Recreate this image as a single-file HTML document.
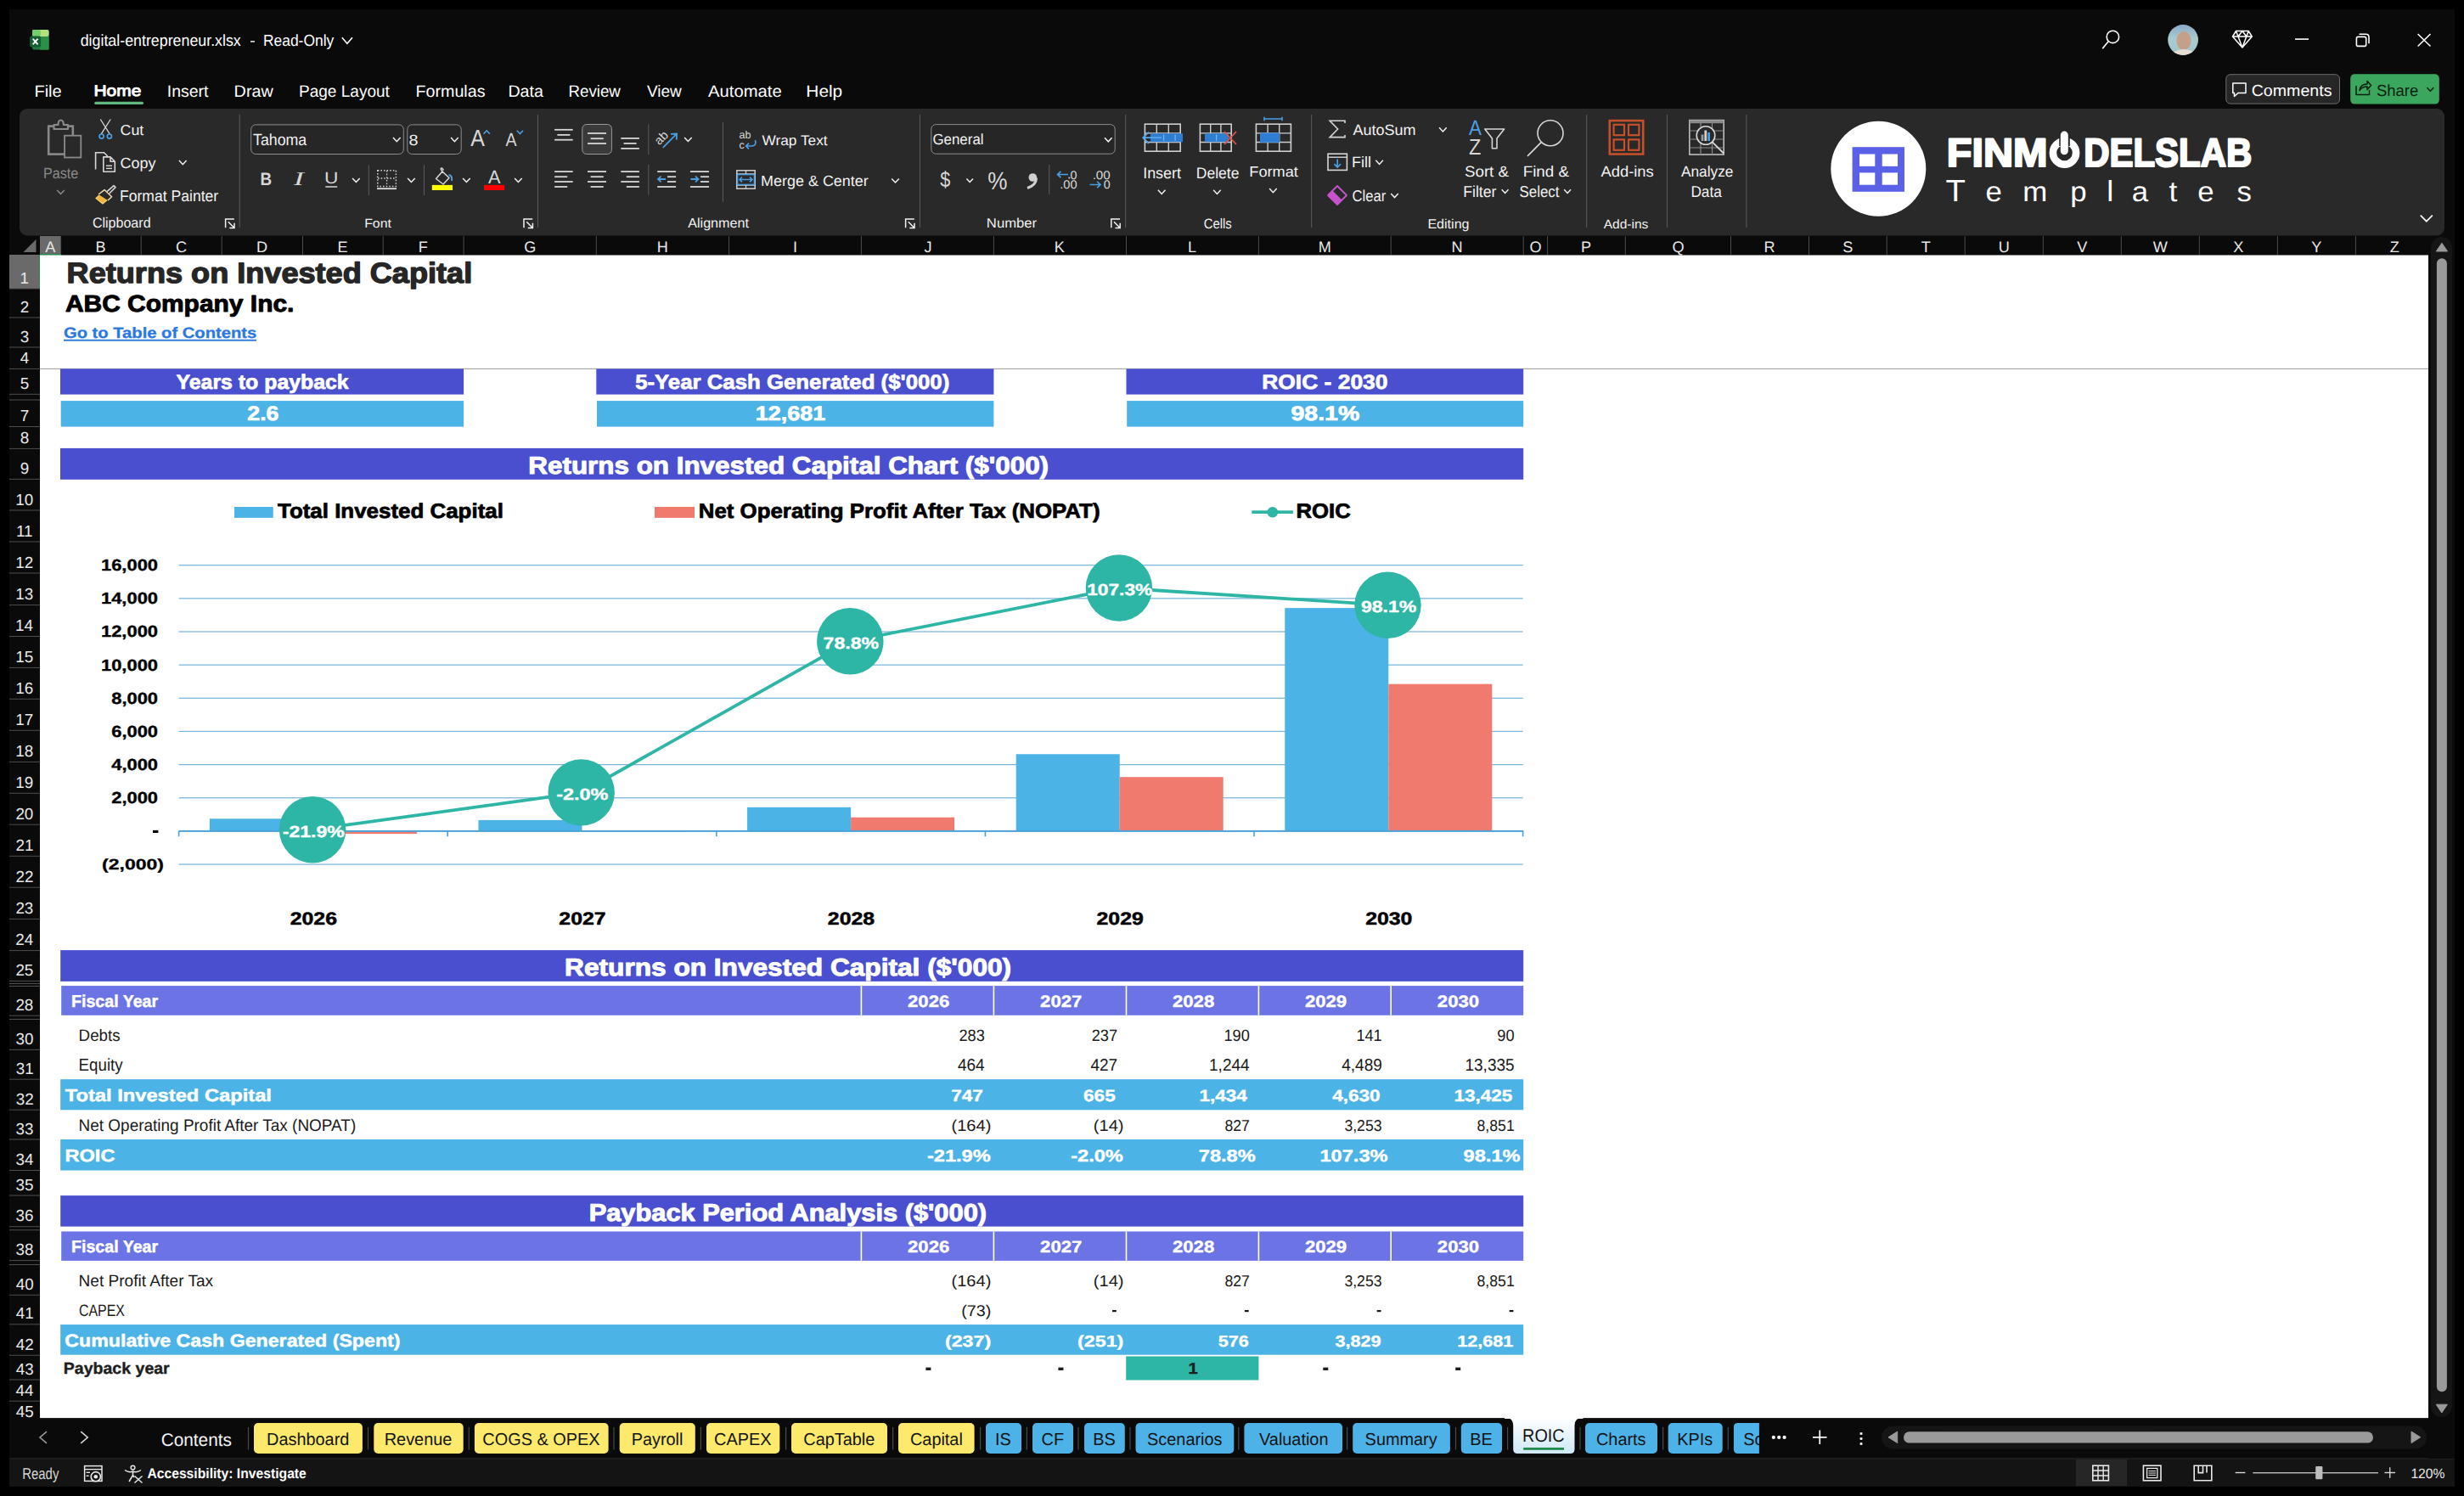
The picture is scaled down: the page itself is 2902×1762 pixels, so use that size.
<!DOCTYPE html>
<html><head><meta charset="utf-8"><title>digital-entrepreneur.xlsx - Excel</title>
<style>html,body{margin:0;padding:0;background:#000;overflow:hidden;width:2902px;height:1762px}
svg{display:block} text{white-space:pre} </style></head>
<body><svg width="2902" height="1762" viewBox="0 0 2902 1762" text-rendering="geometricPrecision">
<rect x="11.00" y="11.00" width="2880.00" height="1740.00" fill="#0a0a0a" />
<rect x="38" y="35" width="19.6" height="23.6" rx="2" fill="#1d7a3e"/>
<rect x="38" y="35" width="19.6" height="8" rx="2" fill="#b6e07b"/>
<rect x="38" y="35" width="9.8" height="8" rx="2" fill="#6fcf6b"/>
<rect x="47" y="43" width="10.6" height="15.6" fill="#2a8f47"/>
<rect x="35.1" y="42.5" width="13" height="13" rx="2" fill="#155e30"/>
<path d="M38.6 45.6 L44.6 52.4 M44.6 45.6 L38.6 52.4" stroke="#fff" stroke-width="1.8"/>
<text transform="translate(94.69,54.10) scale(0.9427,1)" font-family="Liberation Sans" font-weight="normal" font-size="18.90" fill="#fff" >digital-entrepreneur.xlsx</text>
<rect x="295.00" y="48.20" width="5.00" height="1.40" fill="#fff" />
<text transform="translate(309.90,54.10) scale(0.9261,1)" font-family="Liberation Sans" font-weight="normal" font-size="18.84" fill="#fff" >Read-Only</text>
<path d="M402.8 44.3 L408.9 51.2 L415 44.3" fill="none" stroke="#fff" stroke-width="1.6"/>
<circle cx="2488.4" cy="43.4" r="7.2" fill="none" stroke="#fff" stroke-width="1.6"/><path d="M2483.2 48.8 L2476.2 57.2" stroke="#fff" stroke-width="1.7"/>
<defs><clipPath id="av"><circle cx="2571.1" cy="47" r="17.9"/></clipPath><linearGradient id="avg" x1="0" y1="0" x2="0" y2="1"><stop offset="0" stop-color="#8aa9c8"/><stop offset="0.45" stop-color="#a9cbd0"/><stop offset="1" stop-color="#9fc6c8"/></linearGradient><linearGradient id="tabg" x1="0" y1="0" x2="0" y2="1"><stop offset="0" stop-color="#ffffff"/><stop offset="1" stop-color="#cfe8f6"/></linearGradient></defs>
<g clip-path="url(#av)"><rect x="2553" y="29" width="37" height="37" fill="url(#avg)"/><ellipse cx="2572" cy="48" rx="8.5" ry="11" fill="#c49f8a"/><ellipse cx="2572" cy="67" rx="15" ry="9" fill="#e6ddd3"/></g>
<path d="M2633.5 36.5 L2648.2 36.5 L2652.3 43 L2640.9 56 L2629.5 43 Z M2629.5 43 L2652.3 43 M2636 43 L2640.9 56 L2645.8 43 M2633.5 36.5 L2636 43 L2640.9 36.5 L2645.8 43 L2648.2 36.5" fill="none" stroke="#fff" stroke-width="1.5" stroke-linejoin="round"/>
<rect x="2703.00" y="45.30" width="16.00" height="1.60" fill="#fff" />
<rect x="2775.4" y="43.4" width="11.3" height="11" rx="2" fill="none" stroke="#fff" stroke-width="1.6"/><path d="M2778.5 40.3 L2786.5 40.3 Q2790 40.3 2790 43.8 L2790 51.3" fill="none" stroke="#fff" stroke-width="1.6"/>
<path d="M2847.6 40 L2862.5 54.5 M2862.5 40 L2847.6 54.5" stroke="#fff" stroke-width="1.6"/>
<text transform="translate(40.39,113.80) scale(1.0332,1)" font-family="Liberation Sans" font-weight="normal" font-size="19.42" fill="#fff" >File</text>
<text transform="translate(110.48,113.35) scale(1.1554,1)" font-family="Liberation Sans" font-weight="normal" font-size="18.12" fill="#fff" stroke="#fff" stroke-width="0.90" stroke-linejoin="round" >Home</text>
<rect x="111.20" y="119.80" width="57.80" height="3.30" fill="#5fb97f" rx="1.6" />
<text transform="translate(196.74,113.80) scale(1.0050,1)" font-family="Liberation Sans" font-weight="normal" font-size="19.42" fill="#fff" >Insert</text>
<text transform="translate(275.62,113.80) scale(1.0179,1)" font-family="Liberation Sans" font-weight="normal" font-size="19.42" fill="#fff" >Draw</text>
<text transform="translate(351.98,113.80) scale(0.9810,1)" font-family="Liberation Sans" font-weight="normal" font-size="19.42" fill="#fff" >Page Layout</text>
<text transform="translate(489.42,113.80) scale(1.0153,1)" font-family="Liberation Sans" font-weight="normal" font-size="19.42" fill="#fff" >Formulas</text>
<text transform="translate(598.43,113.80) scale(1.0116,1)" font-family="Liberation Sans" font-weight="normal" font-size="19.42" fill="#fff" >Data</text>
<text transform="translate(669.50,113.80) scale(0.9635,1)" font-family="Liberation Sans" font-weight="normal" font-size="19.42" fill="#fff" >Review</text>
<text transform="translate(762.00,113.80) scale(0.9787,1)" font-family="Liberation Sans" font-weight="normal" font-size="19.42" fill="#fff" >View</text>
<text transform="translate(834.00,113.80) scale(1.0434,1)" font-family="Liberation Sans" font-weight="normal" font-size="19.42" fill="#fff" >Automate</text>
<text transform="translate(949.33,113.80) scale(1.0747,1)" font-family="Liberation Sans" font-weight="normal" font-size="19.42" fill="#fff" >Help</text>
<rect x="2621.8" y="87.7" width="133.7" height="34.4" rx="5" fill="#262626" stroke="#6e6e6e" stroke-width="1"/>
<path d="M2629.8 98 L2645 98 L2645 109.5 L2636 109.5 L2631.5 113.5 L2631.5 109.5 L2629.8 109.5 Z" fill="none" stroke="#fff" stroke-width="1.5" stroke-linejoin="round"/>
<text transform="translate(2651.72,112.80) scale(1.0404,1)" font-family="Liberation Sans" font-weight="normal" font-size="18.84" fill="#fff" >Comments</text>
<rect x="2768.2" y="87.2" width="104.6" height="35.4" rx="5" fill="#3aa65e"/>
<path d="M2775 101 L2775 111.5 L2790.5 111.5 L2790.5 106 M2779 106.5 Q2780 99 2788 99 L2788 95.5 L2792.5 100.5 L2788 105.5 L2788 102 Q2782 102 2779 106.5 Z" fill="none" stroke="#0b1f10" stroke-width="1.5" stroke-linejoin="round"/>
<text transform="translate(2798.96,112.80) scale(0.9807,1)" font-family="Liberation Sans" font-weight="normal" font-size="18.84" fill="#0b1f10" >Share</text>
<path d="M2858.4 103.2 L2862.3 107.2 L2866.2 103.2" fill="none" stroke="#0b1f10" stroke-width="1.5"/>
<rect x="23.00" y="128.00" width="2856.00" height="149.50" fill="#292929" rx="9" />
<rect x="57.2" y="148.6" width="28.6" height="33" fill="none" stroke="#8a8a8a" stroke-width="2.6"/>
<path d="M63.5 152 L63.5 147 L68.5 147 Q68.5 141.5 71.7 141.5 Q74.9 141.5 74.9 147 L80 147 L80 152 Z" fill="#292929" stroke="#8a8a8a" stroke-width="2.2" stroke-linejoin="round"/>
<rect x="76.1" y="159.7" width="19.2" height="25.8" fill="#292929" stroke="#8a8a8a" stroke-width="1.8"/>
<text transform="translate(50.91,209.70) scale(0.9152,1)" font-family="Liberation Sans" font-weight="normal" font-size="17.68" fill="#8a8a8a" >Paste</text>
<path d="M67.2 224.1 L71.5 228.5 L75.8 224.1" fill="none" stroke="#8a8a8a" stroke-width="1.5"/>
<path d="M118.3 140.5 L129.3 157.8 M130.2 140.5 L119.2 157.8" stroke="#d6d6d6" stroke-width="1.3"/>
<circle cx="119.6" cy="160.6" r="2.6" fill="none" stroke="#4a9fe3" stroke-width="1.7"/><circle cx="128.9" cy="160.6" r="2.6" fill="none" stroke="#4a9fe3" stroke-width="1.7"/>
<text transform="translate(141.51,158.70) scale(1.0429,1)" font-family="Liberation Sans" font-weight="normal" font-size="17.10" fill="#f2f2f2" >Cut</text>
<path d="M112.6 199.5 L112.6 179.8 L122.5 179.8 L126.8 184" fill="none" stroke="#d6d6d6" stroke-width="1.6"/>
<path d="M121.8 202.2 L121.8 184.9 L130 184.9 L135.3 190.2 L135.3 202.2 Z M130 184.9 L130 190.2 L135.3 190.2" fill="#292929" stroke="#d6d6d6" stroke-width="1.6" stroke-linejoin="round"/>
<rect x="125.00" y="194.50" width="7.00" height="1.40" fill="#d6d6d6" />
<rect x="125.00" y="197.70" width="7.00" height="1.40" fill="#d6d6d6" />
<text transform="translate(141.50,197.50) scale(1.0259,1)" font-family="Liberation Sans" font-weight="normal" font-size="17.54" fill="#f2f2f2" >Copy</text>
<path d="M211.0 189.1 L215.3 193.7 L219.6 189.1" fill="none" stroke="#f2f2f2" stroke-width="1.5"/>
<path d="M113 233.5 L121.6 226 L129 233 L121 240 Z" fill="#f0b43c" stroke="#f5d27a" stroke-width="1.2" stroke-linejoin="round"/>
<path d="M116 229 L123 223.6 L131.6 231.8 L127 236" fill="#292929" stroke="#f3e0b0" stroke-width="1.4" stroke-linejoin="round"/>
<path d="M126 225.6 L134 218.6 L136 220.6 L128.6 228" fill="#292929" stroke="#d6d6d6" stroke-width="1.6" stroke-linejoin="round"/>
<text transform="translate(141.00,236.60) scale(0.9541,1)" font-family="Liberation Sans" font-weight="normal" font-size="18.41" fill="#f2f2f2" >Format Painter</text>
<text transform="translate(108.90,267.70) scale(0.9548,1)" font-family="Liberation Sans" font-weight="normal" font-size="16.81" fill="#f2f2f2" >Clipboard</text>
<path d="M265.6 268.2 L265.6 258.0 L275.8 258.0 M268.8 261.2 L275.8 268.2 M276.0 262.7 L276.0 268.4 L270.3 268.4" fill="none" stroke="#f2f2f2" stroke-width="1.5"/>
<rect x="281.70" y="134.70" width="1.00" height="133.50" fill="#5c5c5c" />
<rect x="295.7" y="146.9" width="179.6" height="34.6" rx="5.5" fill="#262626" stroke="#8e8e8e" stroke-width="1"/>
<text transform="translate(298.04,171.20) scale(0.9284,1)" font-family="Liberation Sans" font-weight="normal" font-size="19.13" fill="#f2f2f2" >Tahoma</text>
<path d="M463.0 162.1 L467.3 166.7 L471.6 162.1" fill="none" stroke="#f2f2f2" stroke-width="1.5"/>
<rect x="479.8" y="146.9" width="63.4" height="34.6" rx="5.5" fill="#262626" stroke="#8e8e8e" stroke-width="1"/>
<text transform="translate(481.51,170.90) scale(1.1173,1)" font-family="Liberation Sans" font-weight="normal" font-size="17.71" fill="#f2f2f2" >8</text>
<path d="M531.1 162.1 L535.4 166.7 L539.7 162.1" fill="none" stroke="#f2f2f2" stroke-width="1.5"/>
<text transform="translate(554.30,171.60) scale(0.9052,1)" font-family="Liberation Sans" font-weight="normal" font-size="27.54" fill="#d8d8d8" >A</text>
<path d="M569.6 157.6 L573.2 153.8 L576.8 157.6" fill="none" stroke="#4a9fe3" stroke-width="1.6"/>
<text transform="translate(595.50,171.60) scale(0.8818,1)" font-family="Liberation Sans" font-weight="normal" font-size="22.17" fill="#d8d8d8" >A</text>
<path d="M608.8 153.8 L612.4 157.6 L616 153.8" fill="none" stroke="#4a9fe3" stroke-width="1.6"/>
<text transform="translate(306.47,217.70) scale(0.8986,1)" font-family="Liberation Sans" font-weight="bold" font-size="21.00" fill="#d8d8d8" >B</text>
<text transform="translate(345.93,217.70) scale(1.5722,1)" font-family="Liberation Serif" font-weight="normal" font-size="22.62" fill="#d8d8d8" font-style="italic">I</text>
<text transform="translate(382.01,216.40) scale(1.1719,1)" font-family="Liberation Sans" font-weight="normal" font-size="19.42" fill="#d8d8d8" >U</text>
<rect x="383.30" y="219.25" width="13.90" height="1.50" fill="#d8d8d8" />
<path d="M415.1 209.9 L419.4 214.5 L423.7 209.9" fill="none" stroke="#f2f2f2" stroke-width="1.5"/>
<rect x="433.80" y="194.30" width="1.00" height="35.70" fill="#5c5c5c" />
<rect x="444.8" y="200.8" width="21.6" height="18.6" fill="none" stroke="#d0d0d0" stroke-width="1.5" stroke-dasharray="1.6,2"/>
<path d="M455.6 201 L455.6 219 M445 210 L466.4 210" fill="none" stroke="#d0d0d0" stroke-width="1.3" stroke-dasharray="1.6,2"/>
<rect x="444.00" y="221.30" width="23.00" height="1.80" fill="#e0e0e0" />
<path d="M480.1 209.9 L484.4 214.5 L488.7 209.9" fill="none" stroke="#f2f2f2" stroke-width="1.5"/>
<rect x="499.00" y="194.30" width="1.00" height="35.70" fill="#5c5c5c" />
<path d="M513.5 210.5 L521 202 L529 209.5 L522 217 Z M521 202 L519.5 199.6 Q518.5 198 520.5 198 L522.5 200.5" fill="none" stroke="#d8d8d8" stroke-width="1.5" stroke-linejoin="round"/>
<path d="M528.5 206 Q533 206.5 532 213" fill="none" stroke="#4a9fe3" stroke-width="2"/>
<rect x="508.80" y="217.90" width="24.20" height="6.10" fill="#ffff00" />
<path d="M545.1 209.9 L549.4 214.5 L553.7 209.9" fill="none" stroke="#f2f2f2" stroke-width="1.5"/>
<text transform="translate(575.00,215.80) scale(0.9827,1)" font-family="Liberation Sans" font-weight="normal" font-size="22.17" fill="#d8d8d8" >A</text>
<rect x="570.00" y="217.90" width="24.20" height="6.10" fill="#ff0000" />
<path d="M606.1 209.9 L610.4 214.5 L614.7 209.9" fill="none" stroke="#f2f2f2" stroke-width="1.5"/>
<text transform="translate(429.13,268.00) scale(1.0764,1)" font-family="Liberation Sans" font-weight="normal" font-size="14.78" fill="#f2f2f2" >Font</text>
<path d="M617.0 268.2 L617.0 258.0 L627.2 258.0 M620.2 261.2 L627.2 268.2 M627.4 262.7 L627.4 268.4 L621.7 268.4" fill="none" stroke="#f2f2f2" stroke-width="1.5"/>
<rect x="633.00" y="135.00" width="1.00" height="133.00" fill="#5c5c5c" />
<rect x="685.8" y="146.5" width="34.6" height="35" rx="5" fill="#3a3a3a" stroke="#9a9a9a" stroke-width="1"/>
<rect x="653.10" y="151.90" width="21.60" height="1.80" fill="#d6d6d6" />
<rect x="656.40" y="158.00" width="15.00" height="1.80" fill="#d6d6d6" />
<rect x="653.10" y="163.80" width="21.60" height="1.80" fill="#d6d6d6" />
<rect x="692.00" y="156.10" width="22.00" height="1.80" fill="#d6d6d6" />
<rect x="695.60" y="162.30" width="15.20" height="1.80" fill="#d6d6d6" />
<rect x="692.00" y="168.10" width="22.00" height="1.80" fill="#d6d6d6" />
<rect x="731.30" y="162.00" width="21.60" height="1.80" fill="#d6d6d6" />
<rect x="734.60" y="168.00" width="15.00" height="1.80" fill="#d6d6d6" />
<rect x="731.30" y="174.00" width="21.60" height="1.80" fill="#d6d6d6" />
<rect x="763.30" y="146.40" width="1.00" height="35.60" fill="#5c5c5c" />
<text transform="translate(776.5,171.5) rotate(-45)" font-family="Liberation Sans" font-size="14.5" fill="#d8d8d8">ab</text>
<path d="M780.8 173.8 L797 157.6 M790 157.9 L797.1 157.5 L796.7 164.6" fill="none" stroke="#4a9fe3" stroke-width="1.8"/>
<path d="M806.1 161.9 L810.4 166.5 L814.7 161.9" fill="none" stroke="#f2f2f2" stroke-width="1.5"/>
<rect x="851.00" y="143.70" width="1.00" height="94.00" fill="#5c5c5c" />
<text x="870.5" y="162.5" font-family="Liberation Sans" font-size="12.5" fill="#d8d8d8">ab</text><text x="870.5" y="175" font-family="Liberation Sans" font-size="12.5" fill="#d8d8d8">c</text>
<path d="M889.5 165 Q891.5 172 885 172 L878.8 172 M882 168.6 L878.6 172 L882 175.4" fill="none" stroke="#4a9fe3" stroke-width="1.7"/>
<text transform="translate(897.50,170.50) scale(1.0278,1)" font-family="Liberation Sans" font-weight="normal" font-size="16.81" fill="#f2f2f2" >Wrap Text</text>
<rect x="653.10" y="201.20" width="21.60" height="1.80" fill="#d6d6d6" />
<rect x="653.10" y="207.30" width="15.10" height="1.80" fill="#d6d6d6" />
<rect x="653.10" y="213.10" width="21.60" height="1.80" fill="#d6d6d6" />
<rect x="653.10" y="219.10" width="15.10" height="1.80" fill="#d6d6d6" />
<rect x="692.00" y="201.20" width="22.00" height="1.80" fill="#d6d6d6" />
<rect x="695.60" y="207.30" width="15.20" height="1.80" fill="#d6d6d6" />
<rect x="692.00" y="213.10" width="22.00" height="1.80" fill="#d6d6d6" />
<rect x="695.60" y="219.10" width="15.20" height="1.80" fill="#d6d6d6" />
<rect x="731.30" y="201.20" width="21.60" height="1.80" fill="#d6d6d6" />
<rect x="737.80" y="207.30" width="15.10" height="1.80" fill="#d6d6d6" />
<rect x="731.30" y="213.10" width="21.60" height="1.80" fill="#d6d6d6" />
<rect x="737.80" y="219.10" width="15.10" height="1.80" fill="#d6d6d6" />
<rect x="763.30" y="194.00" width="1.00" height="35.50" fill="#5c5c5c" />
<rect x="774.20" y="201.20" width="21.90" height="1.80" fill="#d6d6d6" />
<rect x="786.00" y="207.30" width="10.10" height="1.80" fill="#d6d6d6" />
<rect x="786.00" y="213.10" width="10.10" height="1.80" fill="#d6d6d6" />
<rect x="774.20" y="219.10" width="21.90" height="1.80" fill="#d6d6d6" />
<path d="M784 211 L775 211 M778.6 207.6 L775 211 L778.6 214.4" fill="none" stroke="#4a9fe3" stroke-width="1.8"/>
<rect x="813.00" y="201.20" width="22.00" height="1.80" fill="#d6d6d6" />
<rect x="825.00" y="207.30" width="10.00" height="1.80" fill="#d6d6d6" />
<rect x="825.00" y="213.10" width="10.00" height="1.80" fill="#d6d6d6" />
<rect x="813.00" y="219.10" width="22.00" height="1.80" fill="#d6d6d6" />
<path d="M813.5 211 L822.5 211 M819 207.6 L822.5 211 L819 214.4" fill="none" stroke="#4a9fe3" stroke-width="1.8"/>
<rect x="867.8" y="200.8" width="21.4" height="21.4" fill="none" stroke="#d0d0d0" stroke-width="1.5"/>
<path d="M867.8 205 L889.2 205 M867.8 218 L889.2 218 M878.5 200.8 L878.5 205 M878.5 218 L878.5 222.2" fill="none" stroke="#d0d0d0" stroke-width="1.3"/>
<rect x="868.6" y="205.6" width="19.8" height="11.8" fill="none" stroke="#4a9fe3" stroke-width="1.5"/>
<path d="M871 211.5 L886 211.5 M874 208.6 L871 211.5 L874 214.4 M883 208.6 L886 211.5 L883 214.4" fill="none" stroke="#4a9fe3" stroke-width="1.5"/>
<text transform="translate(896.06,219.10) scale(1.0241,1)" font-family="Liberation Sans" font-weight="normal" font-size="17.54" fill="#f2f2f2" >Merge &amp; Center</text>
<path d="M1050.2 210.4 L1054.5 215.0 L1058.8 210.4" fill="none" stroke="#f2f2f2" stroke-width="1.5"/>
<text transform="translate(810.20,267.90) scale(1.0123,1)" font-family="Liberation Sans" font-weight="normal" font-size="15.94" fill="#f2f2f2" >Alignment</text>
<path d="M1066.6 268.2 L1066.6 258.0 L1076.8 258.0 M1069.8 261.2 L1076.8 268.2 M1077.0 262.7 L1077.0 268.4 L1071.3 268.4" fill="none" stroke="#f2f2f2" stroke-width="1.5"/>
<rect x="1082.90" y="135.00" width="1.00" height="133.00" fill="#5c5c5c" />
<rect x="1096.8" y="146.6" width="216.4" height="34.6" rx="5.5" fill="#262626" stroke="#8e8e8e" stroke-width="1"/>
<text transform="translate(1098.46,170.40) scale(0.9554,1)" font-family="Liberation Sans" font-weight="normal" font-size="17.68" fill="#f2f2f2" >General</text>
<path d="M1301.0 162.2 L1305.3 166.8 L1309.6 162.2" fill="none" stroke="#f2f2f2" stroke-width="1.5"/>
<text transform="translate(1107.28,219.50) scale(0.8496,1)" font-family="Liberation Sans" font-weight="normal" font-size="25.54" fill="#d8d8d8" >$</text>
<path d="M1138.4 210.5 L1142.2 214.5 L1146.0 210.5" fill="none" stroke="#f2f2f2" stroke-width="1.5"/>
<text transform="translate(1163.22,222.50) scale(0.8927,1)" font-family="Liberation Sans" font-weight="normal" font-size="29.29" fill="#d8d8d8" >%</text>
<circle cx="1216.3" cy="209" r="4.8" fill="#d0d0d0"/><path d="M1220.6 209.5 Q1220.5 218 1210 221.5" fill="none" stroke="#d0d0d0" stroke-width="3"/>
<rect x="1235.20" y="194.00" width="1.00" height="35.00" fill="#5c5c5c" />
<text transform="translate(1260.57,210.50) scale(1.0309,1)" font-family="Liberation Sans" font-weight="normal" font-size="13.86" fill="#d8d8d8" >0</text>
<rect x="1258.50" y="208.60" width="1.80" height="1.80" fill="#d8d8d8" />
<text transform="translate(1248.18,222.30) scale(1.0454,1)" font-family="Liberation Sans" font-weight="normal" font-size="14.00" fill="#d8d8d8" >.00</text>
<path d="M1258 205.5 L1245.6 205.5 M1249.4 201.8 L1245.6 205.5 L1249.4 209.2" fill="none" stroke="#4a9fe3" stroke-width="1.7"/>
<text transform="translate(1286.63,210.50) scale(1.0962,1)" font-family="Liberation Sans" font-weight="normal" font-size="13.86" fill="#d8d8d8" >.00</text>
<text transform="translate(1299.77,222.30) scale(1.0204,1)" font-family="Liberation Sans" font-weight="normal" font-size="14.00" fill="#d8d8d8" >0</text>
<path d="M1283.5 217.5 L1296 217.5 M1292.2 213.8 L1296 217.5 L1292.2 221.2" fill="none" stroke="#4a9fe3" stroke-width="1.7"/>
<text transform="translate(1161.87,267.70) scale(1.0527,1)" font-family="Liberation Sans" font-weight="normal" font-size="15.80" fill="#f2f2f2" >Number</text>
<path d="M1308.8 268.2 L1308.8 258.0 L1319.0 258.0 M1312.0 261.2 L1319.0 268.2 M1319.2 262.7 L1319.2 268.4 L1313.5 268.4" fill="none" stroke="#f2f2f2" stroke-width="1.5"/>
<rect x="1325.20" y="135.00" width="1.00" height="133.00" fill="#5c5c5c" />
<rect x="1348.4" y="146.2" width="41.8" height="32.0" fill="none" stroke="#cfcfcf" stroke-width="1.6"/><path d="M1362.3 146.2 L1362.3 178.2" stroke="#cfcfcf" stroke-width="1.4"/><path d="M1376.3 146.2 L1376.3 178.2" stroke="#cfcfcf" stroke-width="1.4"/><path d="M1348.4 156.9 L1390.2 156.9" stroke="#cfcfcf" stroke-width="1.4"/><path d="M1348.4 167.5 L1390.2 167.5" stroke="#cfcfcf" stroke-width="1.4"/>
<rect x="1355.00" y="157.20" width="38.00" height="10.00" fill="#2e7fd4" />
<rect x="1370.00" y="158.60" width="1.20" height="7.20" fill="#7fb6ea" />
<rect x="1383.50" y="158.60" width="1.20" height="7.20" fill="#7fb6ea" />
<path d="M1368 162.2 L1346.5 162.2 M1353 155.6 L1346.2 162.2 L1353 168.8" fill="none" stroke="#5aa6ea" stroke-width="1.8"/>
<text transform="translate(1346.19,209.70) scale(0.9803,1)" font-family="Liberation Sans" font-weight="normal" font-size="18.26" fill="#f2f2f2" >Insert</text>
<path d="M1363.9 223.8 L1368.2 228.4 L1372.5 223.8" fill="none" stroke="#f2f2f2" stroke-width="1.5"/>
<rect x="1413.4" y="146.2" width="36.8" height="32.0" fill="none" stroke="#cfcfcf" stroke-width="1.6"/><path d="M1425.7 146.2 L1425.7 178.2" stroke="#cfcfcf" stroke-width="1.4"/><path d="M1437.9 146.2 L1437.9 178.2" stroke="#cfcfcf" stroke-width="1.4"/><path d="M1413.4 156.9 L1450.2 156.9" stroke="#cfcfcf" stroke-width="1.4"/><path d="M1413.4 167.5 L1450.2 167.5" stroke="#cfcfcf" stroke-width="1.4"/>
<rect x="1419.00" y="157.20" width="28.00" height="10.00" fill="#2e7fd4" />
<rect x="1432.00" y="158.60" width="1.20" height="7.20" fill="#7fb6ea" />
<path d="M1442 155 L1456 170 M1456 155 L1442 170" stroke="#e0534a" stroke-width="1.8"/>
<text transform="translate(1408.80,209.70) scale(0.9593,1)" font-family="Liberation Sans" font-weight="normal" font-size="18.26" fill="#f2f2f2" >Delete</text>
<path d="M1429.1 223.8 L1433.4 228.4 L1437.7 223.8" fill="none" stroke="#f2f2f2" stroke-width="1.5"/>
<rect x="1479.4" y="146.2" width="41.0" height="32.0" fill="none" stroke="#cfcfcf" stroke-width="1.6"/><path d="M1493.1 146.2 L1493.1 178.2" stroke="#cfcfcf" stroke-width="1.4"/><path d="M1506.7 146.2 L1506.7 178.2" stroke="#cfcfcf" stroke-width="1.4"/><path d="M1479.4 156.9 L1520.4 156.9" stroke="#cfcfcf" stroke-width="1.4"/><path d="M1479.4 167.5 L1520.4 167.5" stroke="#cfcfcf" stroke-width="1.4"/>
<rect x="1484.00" y="156.50" width="23.00" height="11.30" fill="#2e7fd4" />
<path d="M1489 140 L1510 140 M1489 137.8 L1489 142.2 M1510 137.8 L1510 142.2" stroke="#4a9fe3" stroke-width="1.6"/>
<text transform="translate(1471.34,207.80) scale(1.0461,1)" font-family="Liberation Sans" font-weight="normal" font-size="17.39" fill="#f2f2f2" >Format</text>
<path d="M1495.1 222.1 L1499.4 226.7 L1503.7 222.1" fill="none" stroke="#f2f2f2" stroke-width="1.5"/>
<text transform="translate(1417.66,268.90) scale(0.8933,1)" font-family="Liberation Sans" font-weight="normal" font-size="16.67" fill="#f2f2f2" >Cells</text>
<rect x="1544.20" y="135.00" width="1.00" height="133.00" fill="#5c5c5c" />
<path d="M1584 145 L1584 142.3 L1566.2 142.3 L1575.6 152 L1566.2 161.6 L1584 161.6 L1584 159" fill="none" stroke="#d6d6d6" stroke-width="1.6" stroke-linejoin="miter"/>
<text transform="translate(1593.40,159.00) scale(1.0208,1)" font-family="Liberation Sans" font-weight="normal" font-size="17.68" fill="#f2f2f2" >AutoSum</text>
<path d="M1695.1 150.3 L1699.4 154.9 L1703.7 150.3" fill="none" stroke="#f2f2f2" stroke-width="1.5"/>
<rect x="1564" y="181.2" width="22.4" height="19.2" fill="none" stroke="#d6d6d6" stroke-width="1.6"/><path d="M1564 185.2 L1586.4 185.2" stroke="#d6d6d6" stroke-width="1.4"/>
<path d="M1575.2 187.5 L1575.2 197 M1571.4 193.2 L1575.2 197 L1579 193.2" fill="none" stroke="#4a9fe3" stroke-width="1.7"/>
<text transform="translate(1591.96,197.30) scale(1.0000,1)" font-family="Liberation Sans" font-weight="normal" font-size="17.97" fill="#f2f2f2" >Fill</text>
<path d="M1620.3 188.8 L1624.6 193.4 L1628.9 188.8" fill="none" stroke="#f2f2f2" stroke-width="1.5"/>
<path d="M1575 219 L1586 230 L1575 241 L1564 230 Z" fill="none" stroke="#c453cc" stroke-width="1.8" stroke-linejoin="round"/><path d="M1564 230 L1569.5 224.5 L1580.5 235.5 L1575 241 Z" fill="#c453cc"/>
<text transform="translate(1592.57,236.90) scale(0.8897,1)" font-family="Liberation Sans" font-weight="normal" font-size="18.70" fill="#f2f2f2" >Clear</text>
<path d="M1638.2 228.0 L1642.5 232.6 L1646.8 228.0" fill="none" stroke="#f2f2f2" stroke-width="1.5"/>
<text transform="translate(1730.00,159.00) scale(0.8981,1)" font-family="Liberation Sans" font-weight="normal" font-size="24.93" fill="#4a9fe3" >A</text>
<text transform="translate(1729.90,181.60) scale(0.8991,1)" font-family="Liberation Sans" font-weight="normal" font-size="26.09" fill="#d6d6d6" >Z</text>
<path d="M1748.8 152 L1771.6 152 L1763 163 L1763 174.8 L1757.4 174.8 L1757.4 163 Z" fill="none" stroke="#d6d6d6" stroke-width="1.6" stroke-linejoin="round"/>
<text transform="translate(1724.95,207.90) scale(1.0514,1)" font-family="Liberation Sans" font-weight="normal" font-size="17.83" fill="#f2f2f2" >Sort &amp;</text>
<text transform="translate(1723.19,232.20) scale(0.9446,1)" font-family="Liberation Sans" font-weight="normal" font-size="18.70" fill="#f2f2f2" >Filter</text>
<path d="M1768.7 223.2 L1772.6 227.4 L1776.5 223.2" fill="none" stroke="#f2f2f2" stroke-width="1.5"/>
<circle cx="1826" cy="156.8" r="15" fill="none" stroke="#d6d6d6" stroke-width="1.6"/><path d="M1815.4 167.4 L1799 183.8" stroke="#d6d6d6" stroke-width="1.7"/>
<text transform="translate(1793.70,207.90) scale(1.0547,1)" font-family="Liberation Sans" font-weight="normal" font-size="17.83" fill="#f2f2f2" >Find &amp;</text>
<text transform="translate(1789.52,232.20) scale(0.9034,1)" font-family="Liberation Sans" font-weight="normal" font-size="18.70" fill="#f2f2f2" >Select</text>
<path d="M1842.2 223.2 L1846.1 227.4 L1850.0 223.2" fill="none" stroke="#f2f2f2" stroke-width="1.5"/>
<text transform="translate(1681.42,268.70) scale(1.0352,1)" font-family="Liberation Sans" font-weight="normal" font-size="15.51" fill="#f2f2f2" >Editing</text>
<rect x="1868.20" y="135.00" width="1.00" height="133.00" fill="#5c5c5c" />
<rect x="1895.8" y="142.1" width="39.4" height="39.4" fill="none" stroke="#c4512a" stroke-width="2.6"/>
<rect x="1900.6" y="146.8" width="12.4" height="12.4" fill="none" stroke="#c4512a" stroke-width="2.2"/><rect x="1918" y="146.8" width="12.4" height="12.4" fill="none" stroke="#c4512a" stroke-width="2.2"/>
<rect x="1900.6" y="164.4" width="12.4" height="12.4" fill="none" stroke="#c4512a" stroke-width="2.2"/><rect x="1918" y="164.4" width="12.4" height="12.4" fill="none" stroke="#c4512a" stroke-width="2.2"/>
<text transform="translate(1885.50,207.90) scale(1.0299,1)" font-family="Liberation Sans" font-weight="normal" font-size="17.83" fill="#f2f2f2" >Add-ins</text>
<text transform="translate(1888.70,268.70) scale(1.0386,1)" font-family="Liberation Sans" font-weight="normal" font-size="14.93" fill="#f2f2f2" >Add-ins</text>
<rect x="1962.90" y="135.00" width="1.00" height="133.00" fill="#5c5c5c" />
<rect x="1989.8" y="141.6" width="40.4" height="40.4" fill="none" stroke="#bdbdbd" stroke-width="1.6"/>
<rect x="1989.80" y="141.60" width="40.40" height="3.60" fill="#8a8a8a" />
<path d="M1989.8 154 L2030.2 154 M1989.8 164 L2030.2 164 M1989.8 174 L2030.2 174 M2003 145 L2003 182 M2016.5 145 L2016.5 182" stroke="#8a8a8a" stroke-width="1.2"/>
<circle cx="2009" cy="159.5" r="10.8" fill="#292929" stroke="#d8d8d8" stroke-width="1.6"/><path d="M2016.8 167.3 L2030 180.5" stroke="#d8d8d8" stroke-width="1.8"/>
<rect x="2003.60" y="158.50" width="2.80" height="7.50" fill="#9a9a9a" />
<rect x="2007.40" y="153.50" width="2.80" height="12.50" fill="#d0d0d0" />
<rect x="2011.20" y="156.00" width="2.80" height="10.00" fill="#4a9fe3" />
<text transform="translate(1980.00,207.90) scale(0.9686,1)" font-family="Liberation Sans" font-weight="normal" font-size="17.83" fill="#f2f2f2" >Analyze</text>
<text transform="translate(1991.42,232.20) scale(0.9221,1)" font-family="Liberation Sans" font-weight="normal" font-size="18.70" fill="#f2f2f2" >Data</text>
<rect x="2056.40" y="135.00" width="1.00" height="133.00" fill="#5c5c5c" />
<circle cx="2212.3" cy="198.8" r="56" fill="#ffffff"/>
<rect x="2181.60" y="173.20" width="61.40" height="52.60" fill="#5b61e6" />
<rect x="2190.00" y="181.50" width="18.30" height="14.30" fill="#ffffff" />
<rect x="2216.70" y="181.50" width="18.30" height="14.30" fill="#ffffff" />
<rect x="2190.00" y="203.40" width="18.30" height="14.30" fill="#ffffff" />
<rect x="2216.70" y="203.40" width="18.30" height="14.30" fill="#ffffff" />
<text transform="translate(2292.68,196.30) scale(1.0350,1)" font-family="Liberation Sans" font-weight="bold" font-size="47.00" fill="#fff" stroke="#fff" stroke-width="2.20" stroke-linejoin="round" >FINM</text>
<text transform="translate(2454.18,196.30) scale(0.8930,1)" font-family="Liberation Sans" font-weight="bold" font-size="47.00" fill="#fff" stroke="#fff" stroke-width="2.20" stroke-linejoin="round" >DELSLAB</text>
<circle cx="2431.5" cy="180" r="13.6" fill="none" stroke="#fff" stroke-width="8.6"/>
<rect x="2425.20" y="159.00" width="12.60" height="13.00" fill="#292929" />
<rect x="2426.8" y="154.6" width="9" height="27.6" rx="4.5" fill="#fff"/>
<text transform="translate(2291.60,237.40) scale(1.0500,1)" font-family="Liberation Sans" font-weight="normal" font-size="36.52" fill="#fff" >T</text>
<text transform="translate(2338.45,237.40) scale(1.0500,1)" font-family="Liberation Sans" font-weight="normal" font-size="33.15" fill="#fff" >e</text>
<text transform="translate(2382.36,237.40) scale(1.0500,1)" font-family="Liberation Sans" font-weight="normal" font-size="33.15" fill="#fff" >m</text>
<text transform="translate(2438.31,237.40) scale(1.0500,1)" font-family="Liberation Sans" font-weight="normal" font-size="33.15" fill="#fff" >p</text>
<text transform="translate(2481.21,237.40) scale(1.0500,1)" font-family="Liberation Sans" font-weight="normal" font-size="34.52" fill="#fff" >l</text>
<text transform="translate(2510.86,237.40) scale(1.0500,1)" font-family="Liberation Sans" font-weight="normal" font-size="33.15" fill="#fff" >a</text>
<text transform="translate(2554.57,237.40) scale(1.0500,1)" font-family="Liberation Sans" font-weight="normal" font-size="33.69" fill="#fff" >t</text>
<text transform="translate(2588.25,237.40) scale(1.0500,1)" font-family="Liberation Sans" font-weight="normal" font-size="33.15" fill="#fff" >e</text>
<text transform="translate(2634.47,237.40) scale(1.0500,1)" font-family="Liberation Sans" font-weight="normal" font-size="33.15" fill="#fff" >s</text>
<path d="M2850.8 253.7 L2857.8 260.7 L2864.8 253.7" fill="none" stroke="#f2f2f2" stroke-width="1.8"/>
<rect x="11.00" y="278.00" width="2849.00" height="22.00" fill="#0a0a0a" />
<rect x="47.00" y="278.00" width="24.60" height="22.00" fill="#6a6a6a" />
<text transform="translate(53.23,297.00) scale(1.0000,1)" font-family="Liberation Sans" font-weight="normal" font-size="18.12" fill="#e8e8e8" >A</text>
<rect x="71.10" y="278.00" width="1.00" height="22.00" fill="#4e4e4e" />
<text transform="translate(112.56,297.00) scale(1.0000,1)" font-family="Liberation Sans" font-weight="normal" font-size="18.12" fill="#e8e8e8" >B</text>
<rect x="165.70" y="278.00" width="1.00" height="22.00" fill="#4e4e4e" />
<text transform="translate(207.00,297.00) scale(1.0000,1)" font-family="Liberation Sans" font-weight="normal" font-size="18.12" fill="#e8e8e8" >C</text>
<rect x="260.70" y="278.00" width="1.00" height="22.00" fill="#4e4e4e" />
<text transform="translate(301.97,297.00) scale(1.0000,1)" font-family="Liberation Sans" font-weight="normal" font-size="18.12" fill="#e8e8e8" >D</text>
<rect x="356.00" y="278.00" width="1.00" height="22.00" fill="#4e4e4e" />
<text transform="translate(397.42,297.00) scale(1.0000,1)" font-family="Liberation Sans" font-weight="normal" font-size="18.12" fill="#e8e8e8" >E</text>
<rect x="450.70" y="278.00" width="1.00" height="22.00" fill="#4e4e4e" />
<text transform="translate(492.67,297.00) scale(1.0000,1)" font-family="Liberation Sans" font-weight="normal" font-size="18.12" fill="#e8e8e8" >F</text>
<rect x="545.60" y="278.00" width="1.00" height="22.00" fill="#4e4e4e" />
<text transform="translate(617.32,297.00) scale(1.0000,1)" font-family="Liberation Sans" font-weight="normal" font-size="18.12" fill="#e8e8e8" >G</text>
<rect x="701.80" y="278.00" width="1.00" height="22.00" fill="#4e4e4e" />
<text transform="translate(773.84,297.00) scale(1.0000,1)" font-family="Liberation Sans" font-weight="normal" font-size="18.12" fill="#e8e8e8" >H</text>
<rect x="858.10" y="278.00" width="1.00" height="22.00" fill="#4e4e4e" />
<text transform="translate(933.96,297.00) scale(1.0000,1)" font-family="Liberation Sans" font-weight="normal" font-size="18.12" fill="#e8e8e8" >I</text>
<rect x="1013.90" y="278.00" width="1.00" height="22.00" fill="#4e4e4e" />
<text transform="translate(1088.41,297.00) scale(1.0000,1)" font-family="Liberation Sans" font-weight="normal" font-size="18.12" fill="#e8e8e8" >J</text>
<rect x="1169.90" y="278.00" width="1.00" height="22.00" fill="#4e4e4e" />
<text transform="translate(1241.75,297.00) scale(1.0000,1)" font-family="Liberation Sans" font-weight="normal" font-size="18.12" fill="#e8e8e8" >K</text>
<rect x="1326.00" y="278.00" width="1.00" height="22.00" fill="#4e4e4e" />
<text transform="translate(1398.92,297.00) scale(1.0000,1)" font-family="Liberation Sans" font-weight="normal" font-size="18.12" fill="#e8e8e8" >L</text>
<rect x="1481.90" y="278.00" width="1.00" height="22.00" fill="#4e4e4e" />
<text transform="translate(1552.69,297.00) scale(1.0000,1)" font-family="Liberation Sans" font-weight="normal" font-size="18.12" fill="#e8e8e8" >M</text>
<rect x="1637.70" y="278.00" width="1.00" height="22.00" fill="#4e4e4e" />
<text transform="translate(1709.59,297.00) scale(1.0000,1)" font-family="Liberation Sans" font-weight="normal" font-size="18.12" fill="#e8e8e8" >N</text>
<rect x="1793.70" y="278.00" width="1.00" height="22.00" fill="#4e4e4e" />
<text transform="translate(1801.43,297.00) scale(1.0000,1)" font-family="Liberation Sans" font-weight="normal" font-size="18.12" fill="#e8e8e8" >O</text>
<rect x="1822.10" y="278.00" width="1.00" height="22.00" fill="#4e4e4e" />
<text transform="translate(1862.11,297.00) scale(1.0000,1)" font-family="Liberation Sans" font-weight="normal" font-size="18.12" fill="#e8e8e8" >P</text>
<rect x="1913.80" y="278.00" width="1.00" height="22.00" fill="#4e4e4e" />
<text transform="translate(1969.43,297.00) scale(1.0000,1)" font-family="Liberation Sans" font-weight="normal" font-size="18.12" fill="#e8e8e8" >Q</text>
<rect x="2038.00" y="278.00" width="1.00" height="22.00" fill="#4e4e4e" />
<text transform="translate(2077.62,297.00) scale(1.0000,1)" font-family="Liberation Sans" font-weight="normal" font-size="18.12" fill="#e8e8e8" >R</text>
<rect x="2130.00" y="278.00" width="1.00" height="22.00" fill="#4e4e4e" />
<text transform="translate(2170.28,297.00) scale(1.0000,1)" font-family="Liberation Sans" font-weight="normal" font-size="18.12" fill="#e8e8e8" >S</text>
<rect x="2221.70" y="278.00" width="1.00" height="22.00" fill="#4e4e4e" />
<text transform="translate(2262.67,297.00) scale(1.0000,1)" font-family="Liberation Sans" font-weight="normal" font-size="18.12" fill="#e8e8e8" >T</text>
<rect x="2313.70" y="278.00" width="1.00" height="22.00" fill="#4e4e4e" />
<text transform="translate(2353.73,297.00) scale(1.0000,1)" font-family="Liberation Sans" font-weight="normal" font-size="18.12" fill="#e8e8e8" >U</text>
<rect x="2405.80" y="278.00" width="1.00" height="22.00" fill="#4e4e4e" />
<text transform="translate(2446.23,297.00) scale(1.0000,1)" font-family="Liberation Sans" font-weight="normal" font-size="18.12" fill="#e8e8e8" >V</text>
<rect x="2497.80" y="278.00" width="1.00" height="22.00" fill="#4e4e4e" />
<text transform="translate(2535.69,297.00) scale(1.0000,1)" font-family="Liberation Sans" font-weight="normal" font-size="18.12" fill="#e8e8e8" >W</text>
<rect x="2589.80" y="278.00" width="1.00" height="22.00" fill="#4e4e4e" />
<text transform="translate(2630.28,297.00) scale(1.0000,1)" font-family="Liberation Sans" font-weight="normal" font-size="18.12" fill="#e8e8e8" >X</text>
<rect x="2681.90" y="278.00" width="1.00" height="22.00" fill="#4e4e4e" />
<text transform="translate(2722.33,297.00) scale(1.0000,1)" font-family="Liberation Sans" font-weight="normal" font-size="18.12" fill="#e8e8e8" >Y</text>
<rect x="2773.90" y="278.00" width="1.00" height="22.00" fill="#4e4e4e" />
<text transform="translate(2814.87,297.00) scale(1.0000,1)" font-family="Liberation Sans" font-weight="normal" font-size="18.12" fill="#e8e8e8" >Z</text>
<rect x="47.00" y="299.00" width="25.00" height="2.00" fill="#1f8a4c" />
<rect x="11.00" y="300.00" width="36.00" height="1370.00" fill="#0a0a0a" />
<rect x="11.00" y="300.00" width="36.00" height="40.00" fill="#6a6a6a" />
<rect x="11.00" y="339.50" width="36.00" height="1.00" fill="#4e4e4e" />
<text transform="translate(23.54,333.50) scale(1.0000,1)" font-family="Liberation Sans" font-weight="normal" font-size="18.84" fill="#e8e8e8" >1</text>
<rect x="11.00" y="373.50" width="36.00" height="1.00" fill="#4e4e4e" />
<text transform="translate(23.72,367.50) scale(1.0000,1)" font-family="Liberation Sans" font-weight="normal" font-size="18.84" fill="#e8e8e8" >2</text>
<rect x="11.00" y="408.50" width="36.00" height="1.00" fill="#4e4e4e" />
<text transform="translate(23.82,402.50) scale(1.0000,1)" font-family="Liberation Sans" font-weight="normal" font-size="18.84" fill="#e8e8e8" >3</text>
<rect x="11.00" y="433.90" width="36.00" height="1.00" fill="#4e4e4e" />
<text transform="translate(23.82,427.90) scale(1.0000,1)" font-family="Liberation Sans" font-weight="normal" font-size="18.84" fill="#e8e8e8" >4</text>
<rect x="11.00" y="463.80" width="36.00" height="1.00" fill="#4e4e4e" />
<text transform="translate(23.72,457.80) scale(1.0000,1)" font-family="Liberation Sans" font-weight="normal" font-size="18.84" fill="#e8e8e8" >5</text>
<rect x="11.00" y="470.50" width="36.00" height="1.00" fill="#4e4e4e" />
<rect x="11.00" y="502.00" width="36.00" height="1.00" fill="#4e4e4e" />
<text transform="translate(23.72,496.00) scale(1.0000,1)" font-family="Liberation Sans" font-weight="normal" font-size="18.84" fill="#e8e8e8" >7</text>
<rect x="11.00" y="527.90" width="36.00" height="1.00" fill="#4e4e4e" />
<text transform="translate(23.72,521.90) scale(1.0000,1)" font-family="Liberation Sans" font-weight="normal" font-size="18.84" fill="#e8e8e8" >8</text>
<rect x="11.00" y="563.90" width="36.00" height="1.00" fill="#4e4e4e" />
<text transform="translate(23.82,557.90) scale(1.0000,1)" font-family="Liberation Sans" font-weight="normal" font-size="18.84" fill="#e8e8e8" >9</text>
<rect x="11.00" y="600.50" width="36.00" height="1.00" fill="#4e4e4e" />
<text transform="translate(18.20,594.50) scale(1.0000,1)" font-family="Liberation Sans" font-weight="normal" font-size="18.84" fill="#e8e8e8" >10</text>
<rect x="11.00" y="637.50" width="36.00" height="1.00" fill="#4e4e4e" />
<text transform="translate(19.00,631.50) scale(1.0000,1)" font-family="Liberation Sans" font-weight="normal" font-size="18.84" fill="#e8e8e8" >11</text>
<rect x="11.00" y="674.50" width="36.00" height="1.00" fill="#4e4e4e" />
<text transform="translate(18.30,668.50) scale(1.0000,1)" font-family="Liberation Sans" font-weight="normal" font-size="18.84" fill="#e8e8e8" >12</text>
<rect x="11.00" y="712.10" width="36.00" height="1.00" fill="#4e4e4e" />
<text transform="translate(18.20,706.10) scale(1.0000,1)" font-family="Liberation Sans" font-weight="normal" font-size="18.84" fill="#e8e8e8" >13</text>
<rect x="11.00" y="749.00" width="36.00" height="1.00" fill="#4e4e4e" />
<text transform="translate(18.11,743.00) scale(1.0000,1)" font-family="Liberation Sans" font-weight="normal" font-size="18.84" fill="#e8e8e8" >14</text>
<rect x="11.00" y="785.90" width="36.00" height="1.00" fill="#4e4e4e" />
<text transform="translate(18.20,779.90) scale(1.0000,1)" font-family="Liberation Sans" font-weight="normal" font-size="18.84" fill="#e8e8e8" >15</text>
<rect x="11.00" y="822.80" width="36.00" height="1.00" fill="#4e4e4e" />
<text transform="translate(18.20,816.80) scale(1.0000,1)" font-family="Liberation Sans" font-weight="normal" font-size="18.84" fill="#e8e8e8" >16</text>
<rect x="11.00" y="859.80" width="36.00" height="1.00" fill="#4e4e4e" />
<text transform="translate(18.30,853.80) scale(1.0000,1)" font-family="Liberation Sans" font-weight="normal" font-size="18.84" fill="#e8e8e8" >17</text>
<rect x="11.00" y="896.90" width="36.00" height="1.00" fill="#4e4e4e" />
<text transform="translate(18.20,890.90) scale(1.0000,1)" font-family="Liberation Sans" font-weight="normal" font-size="18.84" fill="#e8e8e8" >18</text>
<rect x="11.00" y="933.80" width="36.00" height="1.00" fill="#4e4e4e" />
<text transform="translate(18.30,927.80) scale(1.0000,1)" font-family="Liberation Sans" font-weight="normal" font-size="18.84" fill="#e8e8e8" >19</text>
<rect x="11.00" y="970.70" width="36.00" height="1.00" fill="#4e4e4e" />
<text transform="translate(18.39,964.70) scale(1.0000,1)" font-family="Liberation Sans" font-weight="normal" font-size="18.84" fill="#e8e8e8" >20</text>
<rect x="11.00" y="1007.80" width="36.00" height="1.00" fill="#4e4e4e" />
<text transform="translate(18.49,1001.80) scale(1.0000,1)" font-family="Liberation Sans" font-weight="normal" font-size="18.84" fill="#e8e8e8" >21</text>
<rect x="11.00" y="1044.70" width="36.00" height="1.00" fill="#4e4e4e" />
<text transform="translate(18.49,1038.70) scale(1.0000,1)" font-family="Liberation Sans" font-weight="normal" font-size="18.84" fill="#e8e8e8" >22</text>
<rect x="11.00" y="1081.90" width="36.00" height="1.00" fill="#4e4e4e" />
<text transform="translate(18.39,1075.90) scale(1.0000,1)" font-family="Liberation Sans" font-weight="normal" font-size="18.84" fill="#e8e8e8" >23</text>
<rect x="11.00" y="1119.10" width="36.00" height="1.00" fill="#4e4e4e" />
<text transform="translate(18.30,1113.10) scale(1.0000,1)" font-family="Liberation Sans" font-weight="normal" font-size="18.84" fill="#e8e8e8" >24</text>
<rect x="11.00" y="1154.90" width="36.00" height="1.00" fill="#4e4e4e" />
<text transform="translate(18.39,1148.90) scale(1.0000,1)" font-family="Liberation Sans" font-weight="normal" font-size="18.84" fill="#e8e8e8" >25</text>
<rect x="11.00" y="1158.00" width="36.00" height="1.00" fill="#4e4e4e" />
<rect x="11.00" y="1161.00" width="36.00" height="1.00" fill="#4e4e4e" />
<rect x="11.00" y="1195.80" width="36.00" height="1.00" fill="#4e4e4e" />
<text transform="translate(18.39,1189.80) scale(1.0000,1)" font-family="Liberation Sans" font-weight="normal" font-size="18.84" fill="#e8e8e8" >28</text>
<rect x="11.00" y="1200.00" width="36.00" height="1.00" fill="#4e4e4e" />
<rect x="11.00" y="1235.90" width="36.00" height="1.00" fill="#4e4e4e" />
<text transform="translate(18.58,1229.90) scale(1.0000,1)" font-family="Liberation Sans" font-weight="normal" font-size="18.84" fill="#e8e8e8" >30</text>
<rect x="11.00" y="1270.70" width="36.00" height="1.00" fill="#4e4e4e" />
<text transform="translate(18.67,1264.70) scale(1.0000,1)" font-family="Liberation Sans" font-weight="normal" font-size="18.84" fill="#e8e8e8" >31</text>
<rect x="11.00" y="1306.70" width="36.00" height="1.00" fill="#4e4e4e" />
<text transform="translate(18.67,1300.70) scale(1.0000,1)" font-family="Liberation Sans" font-weight="normal" font-size="18.84" fill="#e8e8e8" >32</text>
<rect x="11.00" y="1341.50" width="36.00" height="1.00" fill="#4e4e4e" />
<text transform="translate(18.58,1335.50) scale(1.0000,1)" font-family="Liberation Sans" font-weight="normal" font-size="18.84" fill="#e8e8e8" >33</text>
<rect x="11.00" y="1378.00" width="36.00" height="1.00" fill="#4e4e4e" />
<text transform="translate(18.49,1372.00) scale(1.0000,1)" font-family="Liberation Sans" font-weight="normal" font-size="18.84" fill="#e8e8e8" >34</text>
<rect x="11.00" y="1407.50" width="36.00" height="1.00" fill="#4e4e4e" />
<text transform="translate(18.58,1401.50) scale(1.0000,1)" font-family="Liberation Sans" font-weight="normal" font-size="18.84" fill="#e8e8e8" >35</text>
<rect x="11.00" y="1444.20" width="36.00" height="1.00" fill="#4e4e4e" />
<text transform="translate(18.58,1438.20) scale(1.0000,1)" font-family="Liberation Sans" font-weight="normal" font-size="18.84" fill="#e8e8e8" >36</text>
<rect x="11.00" y="1448.20" width="36.00" height="1.00" fill="#4e4e4e" />
<rect x="11.00" y="1484.10" width="36.00" height="1.00" fill="#4e4e4e" />
<text transform="translate(18.58,1478.10) scale(1.0000,1)" font-family="Liberation Sans" font-weight="normal" font-size="18.84" fill="#e8e8e8" >38</text>
<rect x="11.00" y="1489.00" width="36.00" height="1.00" fill="#4e4e4e" />
<rect x="11.00" y="1524.80" width="36.00" height="1.00" fill="#4e4e4e" />
<text transform="translate(18.67,1518.80) scale(1.0000,1)" font-family="Liberation Sans" font-weight="normal" font-size="18.84" fill="#e8e8e8" >40</text>
<rect x="11.00" y="1559.30" width="36.00" height="1.00" fill="#4e4e4e" />
<text transform="translate(18.77,1553.30) scale(1.0000,1)" font-family="Liberation Sans" font-weight="normal" font-size="18.84" fill="#e8e8e8" >41</text>
<rect x="11.00" y="1595.80" width="36.00" height="1.00" fill="#4e4e4e" />
<text transform="translate(18.77,1589.80) scale(1.0000,1)" font-family="Liberation Sans" font-weight="normal" font-size="18.84" fill="#e8e8e8" >42</text>
<rect x="11.00" y="1624.50" width="36.00" height="1.00" fill="#4e4e4e" />
<text transform="translate(18.67,1618.50) scale(1.0000,1)" font-family="Liberation Sans" font-weight="normal" font-size="18.84" fill="#e8e8e8" >43</text>
<rect x="11.00" y="1649.70" width="36.00" height="1.00" fill="#4e4e4e" />
<text transform="translate(18.58,1643.70) scale(1.0000,1)" font-family="Liberation Sans" font-weight="normal" font-size="18.84" fill="#e8e8e8" >44</text>
<rect x="11.00" y="1684.50" width="36.00" height="1.00" fill="#4e4e4e" />
<text transform="translate(18.67,1668.70) scale(1.0000,1)" font-family="Liberation Sans" font-weight="normal" font-size="18.84" fill="#e8e8e8" >45</text>
<rect x="46.00" y="300.00" width="2.00" height="40.00" fill="#1f8a4c" />
<rect x="47.00" y="300.50" width="2813.00" height="1369.50" fill="#ffffff" />
<rect x="47.00" y="433.90" width="2813.00" height="1.00" fill="#9a9a9a" />
<text transform="translate(78.60,333.43) scale(1.0685,1)" font-family="Liberation Sans" font-weight="bold" font-size="33.80" fill="#262626" stroke="#262626" stroke-width="1.34" stroke-linejoin="round" >Returns on Invested Capital</text>
<text transform="translate(76.88,367.43) scale(1.0778,1)" font-family="Liberation Sans" font-weight="bold" font-size="27.79" fill="#000" stroke="#000" stroke-width="0.95" stroke-linejoin="round" >ABC Company Inc.</text>
<text transform="translate(74.94,397.85) scale(1.1306,1)" font-family="Liberation Sans" font-weight="bold" font-size="17.86" fill="#2a78e0" stroke="#2a78e0" stroke-width="0.30" stroke-linejoin="round" >Go to Table of Contents</text>
<rect x="75.00" y="399.80" width="227.00" height="1.90" fill="#2a78e0" />
<rect x="71.00" y="434.40" width="475.10" height="30.20" fill="#4a4fd0" />
<rect x="71.70" y="472.10" width="474.40" height="30.50" fill="#4bb3e6" />
<text transform="translate(207.60,458.35) scale(1.0354,1)" font-family="Liberation Sans" font-weight="bold" font-size="24.00" fill="#fff" stroke="#fff" stroke-width="0.70" stroke-linejoin="round" >Years to payback</text>
<text transform="translate(291.35,495.35) scale(1.1109,1)" font-family="Liberation Sans" font-weight="bold" font-size="24.00" fill="#fff" stroke="#fff" stroke-width="0.70" stroke-linejoin="round" >2.6</text>
<rect x="702.30" y="434.40" width="468.10" height="30.20" fill="#4a4fd0" />
<rect x="703.00" y="472.10" width="467.40" height="30.50" fill="#4bb3e6" />
<text transform="translate(748.18,458.35) scale(1.0741,1)" font-family="Liberation Sans" font-weight="bold" font-size="24.00" fill="#fff" stroke="#fff" stroke-width="0.70" stroke-linejoin="round" >5-Year Cash Generated ($&#x27;000)</text>
<text transform="translate(889.73,495.35) scale(1.1228,1)" font-family="Liberation Sans" font-weight="bold" font-size="24.00" fill="#fff" stroke="#fff" stroke-width="0.70" stroke-linejoin="round" >12,681</text>
<rect x="1326.50" y="434.40" width="467.70" height="30.20" fill="#4a4fd0" />
<rect x="1327.20" y="472.10" width="467.00" height="30.50" fill="#4bb3e6" />
<text transform="translate(1486.27,458.35) scale(1.0996,1)" font-family="Liberation Sans" font-weight="bold" font-size="24.00" fill="#fff" stroke="#fff" stroke-width="0.70" stroke-linejoin="round" >ROIC - 2030</text>
<text transform="translate(1520.50,495.35) scale(1.1859,1)" font-family="Liberation Sans" font-weight="bold" font-size="24.00" fill="#fff" stroke="#fff" stroke-width="0.70" stroke-linejoin="round" >98.1%</text>
<rect x="71.00" y="527.90" width="1723.20" height="36.90" fill="#4a4fd0" />
<text transform="translate(622.32,557.50) scale(1.0990,1)" font-family="Liberation Sans" font-weight="bold" font-size="28.57" fill="#fff" stroke="#fff" stroke-width="1.00" stroke-linejoin="round" >Returns on Invested Capital Chart ($&#x27;000)</text>
<rect x="71.20" y="1119.10" width="1723.00" height="36.80" fill="#4a4fd0" />
<text transform="translate(665.10,1148.70) scale(1.1073,1)" font-family="Liberation Sans" font-weight="bold" font-size="28.57" fill="#fff" stroke="#fff" stroke-width="1.00" stroke-linejoin="round" >Returns on Invested Capital ($&#x27;000)</text>
<rect x="72.20" y="1161.10" width="1722.00" height="34.70" fill="#6c73e5" />
<rect x="1013.60" y="1161.10" width="1.60" height="34.70" fill="#ffffff" />
<rect x="1169.60" y="1161.10" width="1.60" height="34.70" fill="#ffffff" />
<rect x="1325.70" y="1161.10" width="1.60" height="34.70" fill="#ffffff" />
<rect x="1481.60" y="1161.10" width="1.60" height="34.70" fill="#ffffff" />
<rect x="1637.40" y="1161.10" width="1.60" height="34.70" fill="#ffffff" />
<text transform="translate(84.05,1185.87) scale(0.9704,1)" font-family="Liberation Sans" font-weight="bold" font-size="20.21" fill="#fff" stroke="#fff" stroke-width="0.45" stroke-linejoin="round" >Fiscal Year</text>
<text transform="translate(1069.03,1185.70) scale(1.1400,1)" font-family="Liberation Sans" font-weight="bold" font-size="19.43" fill="#fff" stroke="#fff" stroke-width="0.40" stroke-linejoin="round" >2026</text>
<text transform="translate(1225.08,1185.70) scale(1.1400,1)" font-family="Liberation Sans" font-weight="bold" font-size="19.43" fill="#fff" stroke="#fff" stroke-width="0.40" stroke-linejoin="round" >2027</text>
<text transform="translate(1380.97,1185.70) scale(1.1400,1)" font-family="Liberation Sans" font-weight="bold" font-size="19.43" fill="#fff" stroke="#fff" stroke-width="0.40" stroke-linejoin="round" >2028</text>
<text transform="translate(1536.93,1185.70) scale(1.1400,1)" font-family="Liberation Sans" font-weight="bold" font-size="19.43" fill="#fff" stroke="#fff" stroke-width="0.40" stroke-linejoin="round" >2029</text>
<text transform="translate(1692.83,1185.70) scale(1.1400,1)" font-family="Liberation Sans" font-weight="bold" font-size="19.43" fill="#fff" stroke="#fff" stroke-width="0.40" stroke-linejoin="round" >2030</text>
<text transform="translate(92.60,1225.70) scale(0.9651,1)" font-family="Liberation Sans" font-weight="normal" font-size="19.42" fill="#1a1a1a" >Debts</text>
<text transform="translate(1129.42,1225.50) scale(0.9500,1)" font-family="Liberation Sans" font-weight="normal" font-size="19.14" fill="#1a1a1a" >283</text>
<text transform="translate(1285.70,1225.50) scale(0.9500,1)" font-family="Liberation Sans" font-weight="normal" font-size="19.14" fill="#1a1a1a" >237</text>
<text transform="translate(1441.42,1225.50) scale(0.9500,1)" font-family="Liberation Sans" font-weight="normal" font-size="19.14" fill="#1a1a1a" >190</text>
<text transform="translate(1597.40,1225.50) scale(0.9500,1)" font-family="Liberation Sans" font-weight="normal" font-size="19.14" fill="#1a1a1a" >141</text>
<text transform="translate(1763.33,1225.50) scale(0.9500,1)" font-family="Liberation Sans" font-weight="normal" font-size="19.14" fill="#1a1a1a" >90</text>
<text transform="translate(92.60,1261.00) scale(0.9221,1)" font-family="Liberation Sans" font-weight="normal" font-size="20.29" fill="#1a1a1a" >Equity</text>
<text transform="translate(1127.90,1260.80) scale(0.9500,1)" font-family="Liberation Sans" font-weight="normal" font-size="20.00" fill="#1a1a1a" >464</text>
<text transform="translate(1284.38,1260.80) scale(0.9500,1)" font-family="Liberation Sans" font-weight="normal" font-size="20.00" fill="#1a1a1a" >427</text>
<text transform="translate(1424.05,1260.80) scale(0.9500,1)" font-family="Liberation Sans" font-weight="normal" font-size="20.00" fill="#1a1a1a" >1,244</text>
<text transform="translate(1580.23,1260.80) scale(0.9500,1)" font-family="Liberation Sans" font-weight="normal" font-size="20.00" fill="#1a1a1a" >4,489</text>
<text transform="translate(1725.47,1260.80) scale(0.9500,1)" font-family="Liberation Sans" font-weight="normal" font-size="20.00" fill="#1a1a1a" >13,335</text>
<rect x="71.20" y="1271.20" width="1723.00" height="36.10" fill="#4bb3e6" />
<text transform="translate(76.70,1296.57) scale(1.1590,1)" font-family="Liberation Sans" font-weight="bold" font-size="20.47" fill="#fff" stroke="#fff" stroke-width="0.47" stroke-linejoin="round" >Total Invested Capital</text>
<text transform="translate(1120.21,1296.50) scale(1.1600,1)" font-family="Liberation Sans" font-weight="bold" font-size="19.43" fill="#fff" stroke="#fff" stroke-width="0.40" stroke-linejoin="round" >747</text>
<text transform="translate(1276.09,1296.50) scale(1.1600,1)" font-family="Liberation Sans" font-weight="bold" font-size="19.43" fill="#fff" stroke="#fff" stroke-width="0.40" stroke-linejoin="round" >665</text>
<text transform="translate(1412.52,1296.50) scale(1.1600,1)" font-family="Liberation Sans" font-weight="bold" font-size="19.43" fill="#fff" stroke="#fff" stroke-width="0.40" stroke-linejoin="round" >1,434</text>
<text transform="translate(1569.22,1296.50) scale(1.1600,1)" font-family="Liberation Sans" font-weight="bold" font-size="19.43" fill="#fff" stroke="#fff" stroke-width="0.40" stroke-linejoin="round" >4,630</text>
<text transform="translate(1712.46,1296.50) scale(1.1600,1)" font-family="Liberation Sans" font-weight="bold" font-size="19.43" fill="#fff" stroke="#fff" stroke-width="0.40" stroke-linejoin="round" >13,425</text>
<text transform="translate(92.58,1331.90) scale(0.9631,1)" font-family="Liberation Sans" font-weight="normal" font-size="19.71" fill="#1a1a1a" >Net Operating Profit After Tax (NOPAT)</text>
<text transform="translate(1120.54,1331.50) scale(1.0800,1)" font-family="Liberation Sans" font-weight="normal" font-size="18.57" fill="#1a1a1a" >(164)</text>
<text transform="translate(1287.80,1331.50) scale(1.0800,1)" font-family="Liberation Sans" font-weight="normal" font-size="18.57" fill="#1a1a1a" >(14)</text>
<text transform="translate(1442.48,1331.50) scale(0.9500,1)" font-family="Liberation Sans" font-weight="normal" font-size="18.57" fill="#1a1a1a" >827</text>
<text transform="translate(1583.39,1331.50) scale(0.9500,1)" font-family="Liberation Sans" font-weight="normal" font-size="18.57" fill="#1a1a1a" >3,253</text>
<text transform="translate(1739.56,1331.50) scale(0.9500,1)" font-family="Liberation Sans" font-weight="normal" font-size="18.57" fill="#1a1a1a" >8,851</text>
<rect x="71.20" y="1342.00" width="1723.00" height="36.50" fill="#4bb3e6" />
<text transform="translate(76.52,1368.37) scale(1.1521,1)" font-family="Liberation Sans" font-weight="bold" font-size="20.47" fill="#fff" stroke="#fff" stroke-width="0.47" stroke-linejoin="round" >ROIC</text>
<text transform="translate(1091.89,1368.19) scale(1.2000,1)" font-family="Liberation Sans" font-weight="bold" font-size="19.69" fill="#fff" stroke="#fff" stroke-width="0.42" stroke-linejoin="round" >-21.9%</text>
<text transform="translate(1261.13,1368.19) scale(1.2000,1)" font-family="Liberation Sans" font-weight="bold" font-size="19.69" fill="#fff" stroke="#fff" stroke-width="0.42" stroke-linejoin="round" >-2.0%</text>
<text transform="translate(1411.76,1368.19) scale(1.2000,1)" font-family="Liberation Sans" font-weight="bold" font-size="19.69" fill="#fff" stroke="#fff" stroke-width="0.42" stroke-linejoin="round" >78.8%</text>
<text transform="translate(1554.42,1368.19) scale(1.2000,1)" font-family="Liberation Sans" font-weight="bold" font-size="19.69" fill="#fff" stroke="#fff" stroke-width="0.42" stroke-linejoin="round" >107.3%</text>
<text transform="translate(1723.56,1368.19) scale(1.2000,1)" font-family="Liberation Sans" font-weight="bold" font-size="19.69" fill="#fff" stroke="#fff" stroke-width="0.42" stroke-linejoin="round" >98.1%</text>
<rect x="71.20" y="1408.10" width="1723.00" height="36.50" fill="#4a4fd0" />
<text transform="translate(693.65,1437.70) scale(1.0782,1)" font-family="Liberation Sans" font-weight="bold" font-size="28.57" fill="#fff" stroke="#fff" stroke-width="1.00" stroke-linejoin="round" >Payback Period Analysis ($&#x27;000)</text>
<rect x="72.20" y="1450.40" width="1722.00" height="34.50" fill="#6c73e5" />
<rect x="1013.60" y="1450.40" width="1.60" height="34.50" fill="#ffffff" />
<rect x="1169.60" y="1450.40" width="1.60" height="34.50" fill="#ffffff" />
<rect x="1325.70" y="1450.40" width="1.60" height="34.50" fill="#ffffff" />
<rect x="1481.60" y="1450.40" width="1.60" height="34.50" fill="#ffffff" />
<rect x="1637.40" y="1450.40" width="1.60" height="34.50" fill="#ffffff" />
<text transform="translate(84.05,1475.17) scale(0.9704,1)" font-family="Liberation Sans" font-weight="bold" font-size="20.21" fill="#fff" stroke="#fff" stroke-width="0.45" stroke-linejoin="round" >Fiscal Year</text>
<text transform="translate(1069.03,1475.00) scale(1.1400,1)" font-family="Liberation Sans" font-weight="bold" font-size="19.43" fill="#fff" stroke="#fff" stroke-width="0.40" stroke-linejoin="round" >2026</text>
<text transform="translate(1225.08,1475.00) scale(1.1400,1)" font-family="Liberation Sans" font-weight="bold" font-size="19.43" fill="#fff" stroke="#fff" stroke-width="0.40" stroke-linejoin="round" >2027</text>
<text transform="translate(1380.97,1475.00) scale(1.1400,1)" font-family="Liberation Sans" font-weight="bold" font-size="19.43" fill="#fff" stroke="#fff" stroke-width="0.40" stroke-linejoin="round" >2028</text>
<text transform="translate(1536.93,1475.00) scale(1.1400,1)" font-family="Liberation Sans" font-weight="bold" font-size="19.43" fill="#fff" stroke="#fff" stroke-width="0.40" stroke-linejoin="round" >2029</text>
<text transform="translate(1692.83,1475.00) scale(1.1400,1)" font-family="Liberation Sans" font-weight="bold" font-size="19.43" fill="#fff" stroke="#fff" stroke-width="0.40" stroke-linejoin="round" >2030</text>
<text transform="translate(92.57,1515.10) scale(0.9819,1)" font-family="Liberation Sans" font-weight="normal" font-size="19.42" fill="#1a1a1a" >Net Profit After Tax</text>
<text transform="translate(1120.54,1514.90) scale(1.0800,1)" font-family="Liberation Sans" font-weight="normal" font-size="18.57" fill="#1a1a1a" >(164)</text>
<text transform="translate(1287.80,1514.90) scale(1.0800,1)" font-family="Liberation Sans" font-weight="normal" font-size="18.57" fill="#1a1a1a" >(14)</text>
<text transform="translate(1442.48,1514.90) scale(0.9500,1)" font-family="Liberation Sans" font-weight="normal" font-size="18.57" fill="#1a1a1a" >827</text>
<text transform="translate(1583.39,1514.90) scale(0.9500,1)" font-family="Liberation Sans" font-weight="normal" font-size="18.57" fill="#1a1a1a" >3,253</text>
<text transform="translate(1739.56,1514.90) scale(0.9500,1)" font-family="Liberation Sans" font-weight="normal" font-size="18.57" fill="#1a1a1a" >8,851</text>
<text transform="translate(93.00,1550.00) scale(0.8197,1)" font-family="Liberation Sans" font-weight="normal" font-size="19.42" fill="#1a1a1a" >CAPEX</text>
<text transform="translate(1132.23,1550.00) scale(1.0800,1)" font-family="Liberation Sans" font-weight="normal" font-size="18.29" fill="#1a1a1a" >(73)</text>
<rect x="1310.00" y="1543.00" width="4.80" height="2.20" fill="#1a1a1a" />
<rect x="1465.90" y="1543.00" width="4.80" height="2.20" fill="#1a1a1a" />
<rect x="1621.70" y="1543.00" width="4.80" height="2.20" fill="#1a1a1a" />
<rect x="1777.70" y="1543.00" width="4.80" height="2.20" fill="#1a1a1a" />
<rect x="71.20" y="1560.10" width="1723.00" height="35.60" fill="#4bb3e6" />
<text transform="translate(76.32,1585.96) scale(1.1180,1)" font-family="Liberation Sans" font-weight="bold" font-size="20.73" fill="#fff" stroke="#fff" stroke-width="0.49" stroke-linejoin="round" >Cumulative Cash Generated (Spent)</text>
<text transform="translate(1112.89,1585.73) scale(1.2500,1)" font-family="Liberation Sans" font-weight="bold" font-size="18.64" fill="#fff" stroke="#fff" stroke-width="0.35" stroke-linejoin="round" >(237)</text>
<text transform="translate(1268.99,1585.73) scale(1.2500,1)" font-family="Liberation Sans" font-weight="bold" font-size="18.64" fill="#fff" stroke="#fff" stroke-width="0.35" stroke-linejoin="round" >(251)</text>
<text transform="translate(1434.70,1585.73) scale(1.1600,1)" font-family="Liberation Sans" font-weight="bold" font-size="18.64" fill="#fff" stroke="#fff" stroke-width="0.35" stroke-linejoin="round" >576</text>
<text transform="translate(1572.46,1585.73) scale(1.1600,1)" font-family="Liberation Sans" font-weight="bold" font-size="18.64" fill="#fff" stroke="#fff" stroke-width="0.35" stroke-linejoin="round" >3,829</text>
<text transform="translate(1716.21,1585.73) scale(1.1600,1)" font-family="Liberation Sans" font-weight="bold" font-size="18.64" fill="#fff" stroke="#fff" stroke-width="0.35" stroke-linejoin="round" >12,681</text>
<text transform="translate(74.82,1617.81) scale(1.0197,1)" font-family="Liberation Sans" font-weight="bold" font-size="19.17" fill="#1e1e1e" stroke="#1e1e1e" stroke-width="0.38" stroke-linejoin="round" >Payback year</text>
<rect x="1326.20" y="1597.50" width="156.20" height="28.00" fill="#2db5a6" />
<rect x="1090.40" y="1610.60" width="6.00" height="3.40" fill="#1e1e1e" />
<rect x="1246.45" y="1610.60" width="6.00" height="3.40" fill="#1e1e1e" />
<text transform="translate(1399.45,1617.83) scale(1.0900,1)" font-family="Liberation Sans" font-weight="bold" font-size="18.64" fill="#1e1e1e" stroke="#1e1e1e" stroke-width="0.35" stroke-linejoin="round" >1</text>
<rect x="1558.30" y="1610.60" width="6.00" height="3.40" fill="#1e1e1e" />
<rect x="1714.20" y="1610.60" width="6.00" height="3.40" fill="#1e1e1e" />
<rect x="210.60" y="665.10" width="1583.00" height="1.20" fill="#74b4d8" />
<text transform="translate(119.03,672.11) scale(1.1500,1)" font-family="Liberation Sans" font-weight="bold" font-size="19.04" fill="#000" stroke="#000" stroke-width="0.37" stroke-linejoin="round" >16,000</text>
<rect x="210.60" y="704.25" width="1583.00" height="1.20" fill="#74b4d8" />
<text transform="translate(119.03,711.26) scale(1.1500,1)" font-family="Liberation Sans" font-weight="bold" font-size="19.04" fill="#000" stroke="#000" stroke-width="0.37" stroke-linejoin="round" >14,000</text>
<rect x="210.60" y="743.40" width="1583.00" height="1.20" fill="#74b4d8" />
<text transform="translate(119.03,750.41) scale(1.1500,1)" font-family="Liberation Sans" font-weight="bold" font-size="19.04" fill="#000" stroke="#000" stroke-width="0.37" stroke-linejoin="round" >12,000</text>
<rect x="210.60" y="782.55" width="1583.00" height="1.20" fill="#74b4d8" />
<text transform="translate(119.03,789.56) scale(1.1500,1)" font-family="Liberation Sans" font-weight="bold" font-size="19.04" fill="#000" stroke="#000" stroke-width="0.37" stroke-linejoin="round" >10,000</text>
<rect x="210.60" y="821.70" width="1583.00" height="1.20" fill="#74b4d8" />
<text transform="translate(131.21,828.71) scale(1.1500,1)" font-family="Liberation Sans" font-weight="bold" font-size="19.04" fill="#000" stroke="#000" stroke-width="0.37" stroke-linejoin="round" >8,000</text>
<rect x="210.60" y="860.85" width="1583.00" height="1.20" fill="#74b4d8" />
<text transform="translate(131.21,867.86) scale(1.1500,1)" font-family="Liberation Sans" font-weight="bold" font-size="19.04" fill="#000" stroke="#000" stroke-width="0.37" stroke-linejoin="round" >6,000</text>
<rect x="210.60" y="900.00" width="1583.00" height="1.20" fill="#74b4d8" />
<text transform="translate(131.21,907.01) scale(1.1500,1)" font-family="Liberation Sans" font-weight="bold" font-size="19.04" fill="#000" stroke="#000" stroke-width="0.37" stroke-linejoin="round" >4,000</text>
<rect x="210.60" y="939.15" width="1583.00" height="1.20" fill="#74b4d8" />
<text transform="translate(131.21,946.16) scale(1.1500,1)" font-family="Liberation Sans" font-weight="bold" font-size="19.04" fill="#000" stroke="#000" stroke-width="0.37" stroke-linejoin="round" >2,000</text>
<rect x="210.60" y="1017.45" width="1583.00" height="1.20" fill="#74b4d8" />
<text transform="translate(120.02,1024.11) scale(1.2999,1)" font-family="Liberation Sans" font-weight="bold" font-size="17.73" fill="#000" stroke="#000" stroke-width="0.29" stroke-linejoin="round" >(2,000)</text>
<rect x="180.00" y="977.90" width="6.40" height="3.10" fill="#000" />
<rect x="246.90" y="964.28" width="122.00" height="14.62" fill="#4bb3e6" />
<rect x="368.90" y="978.90" width="122.00" height="3.21" fill="#ef7a6d" />
<rect x="563.50" y="965.88" width="122.00" height="13.02" fill="#4bb3e6" />
<rect x="685.50" y="978.90" width="122.00" height="0.27" fill="#ef7a6d" />
<rect x="880.10" y="950.83" width="122.00" height="28.07" fill="#4bb3e6" />
<rect x="1002.10" y="962.71" width="122.00" height="16.19" fill="#ef7a6d" />
<rect x="1196.70" y="888.27" width="122.00" height="90.63" fill="#4bb3e6" />
<rect x="1318.70" y="915.22" width="122.00" height="63.68" fill="#ef7a6d" />
<rect x="1513.30" y="716.11" width="122.00" height="262.79" fill="#4bb3e6" />
<rect x="1635.30" y="805.64" width="122.00" height="173.26" fill="#ef7a6d" />
<rect x="210.60" y="977.90" width="1583.60" height="2.00" fill="#4aa3d8" />
<rect x="209.80" y="978.90" width="1.60" height="6.30" fill="#4aa3d8" />
<rect x="526.40" y="978.90" width="1.60" height="6.30" fill="#4aa3d8" />
<rect x="843.00" y="978.90" width="1.60" height="6.30" fill="#4aa3d8" />
<rect x="1159.60" y="978.90" width="1.60" height="6.30" fill="#4aa3d8" />
<rect x="1476.20" y="978.90" width="1.60" height="6.30" fill="#4aa3d8" />
<rect x="1792.80" y="978.90" width="1.60" height="6.30" fill="#4aa3d8" />
<polyline points="368.1,977.2 684.7,933.4 1001.3,755.3 1317.9,692.5 1634.5,712.8" fill="none" stroke="#2db5a6" stroke-width="3.8" stroke-linejoin="round"/>
<circle cx="368.1" cy="977.2" r="39.2" fill="#2db5a6"/>
<text transform="translate(332.80,985.61) scale(1.2012,1)" font-family="Liberation Sans" font-weight="bold" font-size="19.17" fill="#fff" stroke="#fff" stroke-width="0.38" stroke-linejoin="round" >-21.9%</text>
<circle cx="684.7" cy="933.4" r="39.2" fill="#2db5a6"/>
<text transform="translate(655.29,941.76) scale(1.2216,1)" font-family="Liberation Sans" font-weight="bold" font-size="19.17" fill="#fff" stroke="#fff" stroke-width="0.38" stroke-linejoin="round" >-2.0%</text>
<circle cx="1001.3" cy="755.3" r="39.2" fill="#2db5a6"/>
<text transform="translate(969.62,763.72) scale(1.2049,1)" font-family="Liberation Sans" font-weight="bold" font-size="19.17" fill="#fff" stroke="#fff" stroke-width="0.38" stroke-linejoin="round" >78.8%</text>
<circle cx="1317.9" cy="692.5" r="39.2" fill="#2db5a6"/>
<text transform="translate(1280.13,700.92) scale(1.1878,1)" font-family="Liberation Sans" font-weight="bold" font-size="19.17" fill="#fff" stroke="#fff" stroke-width="0.38" stroke-linejoin="round" >107.3%</text>
<circle cx="1634.5" cy="712.8" r="39.2" fill="#2db5a6"/>
<text transform="translate(1602.95,721.19) scale(1.2043,1)" font-family="Liberation Sans" font-weight="bold" font-size="19.17" fill="#fff" stroke="#fff" stroke-width="0.38" stroke-linejoin="round" >98.1%</text>
<text transform="translate(341.76,1089.35) scale(1.1900,1)" font-family="Liberation Sans" font-weight="bold" font-size="20.87" fill="#000" stroke="#000" stroke-width="0.49" stroke-linejoin="round" >2026</text>
<text transform="translate(658.36,1089.35) scale(1.1900,1)" font-family="Liberation Sans" font-weight="bold" font-size="20.87" fill="#000" stroke="#000" stroke-width="0.49" stroke-linejoin="round" >2027</text>
<text transform="translate(974.83,1089.35) scale(1.1900,1)" font-family="Liberation Sans" font-weight="bold" font-size="20.87" fill="#000" stroke="#000" stroke-width="0.49" stroke-linejoin="round" >2028</text>
<text transform="translate(1291.56,1089.35) scale(1.1900,1)" font-family="Liberation Sans" font-weight="bold" font-size="20.87" fill="#000" stroke="#000" stroke-width="0.49" stroke-linejoin="round" >2029</text>
<text transform="translate(1608.16,1089.35) scale(1.1900,1)" font-family="Liberation Sans" font-weight="bold" font-size="20.87" fill="#000" stroke="#000" stroke-width="0.49" stroke-linejoin="round" >2030</text>
<rect x="276.00" y="597.00" width="45.70" height="12.90" fill="#4bb3e6" />
<text transform="translate(327.00,610.34) scale(1.0685,1)" font-family="Liberation Sans" font-weight="bold" font-size="24.26" fill="#000" stroke="#000" stroke-width="0.72" stroke-linejoin="round" >Total Invested Capital</text>
<rect x="771.00" y="597.00" width="47.00" height="12.90" fill="#ef7a6d" />
<text transform="translate(822.81,610.34) scale(1.0653,1)" font-family="Liberation Sans" font-weight="bold" font-size="24.26" fill="#000" stroke="#000" stroke-width="0.72" stroke-linejoin="round" >Net Operating Profit After Tax (NOPAT)</text>
<rect x="1474.30" y="601.30" width="48.60" height="3.70" fill="#2db5a6" />
<circle cx="1498.8" cy="603.2" r="6.3" fill="#2db5a6"/>
<text transform="translate(1526.52,610.34) scale(1.0601,1)" font-family="Liberation Sans" font-weight="bold" font-size="24.26" fill="#000" stroke="#000" stroke-width="0.72" stroke-linejoin="round" >ROIC</text>
<rect x="11.00" y="1670.00" width="2849.00" height="48.00" fill="#0a0a0a" />
<rect x="47.00" y="1670.00" width="2813.00" height="1.20" fill="#262626" />
<rect x="11.00" y="1717.90" width="2880.00" height="33.10" fill="#141414" />
<rect x="11.00" y="1717.40" width="2880.00" height="1.00" fill="#2c2c2c" />
<rect x="2860.00" y="278.00" width="31.00" height="1440.00" fill="#0a0a0a" />
<rect x="2863" y="279" width="25" height="1390" rx="12.5" fill="#151515"/>
<path d="M2869.3 296 L2875.9 286.3 L2882.5 296 Z" fill="#9a9a9a" stroke="#9a9a9a" stroke-width="1" stroke-linejoin="round"/>
<rect x="2869.9" y="304.2" width="12" height="1335" rx="6" fill="#9a9a9a"/>
<path d="M2869.2 1654.2 L2882.4 1654.2 L2875.8 1664 Z" fill="#9a9a9a" stroke="#9a9a9a" stroke-width="1" stroke-linejoin="round"/>
<path d="M42.5 282 L42.5 297 L27.5 297 Z" fill="#6a6a6a"/>
<path d="M55 1686.2 L47 1693 L55 1699.8" fill="none" stroke="#9a9a9a" stroke-width="1.6"/><path d="M95.2 1686.2 L103.2 1693 L95.2 1699.8" fill="none" stroke="#d8d8d8" stroke-width="1.6"/>
<text transform="translate(189.66,1702.70) scale(0.9832,1)" font-family="Liberation Sans" font-weight="normal" font-size="21.16" fill="#f4f4f4" >Contents</text>
<rect x="291.90" y="1681.00" width="1.20" height="26.50" fill="#4a4a4a" />
<rect x="432.90" y="1681.00" width="1.20" height="26.50" fill="#4a4a4a" />
<rect x="551.70" y="1681.00" width="1.20" height="26.50" fill="#4a4a4a" />
<rect x="722.40" y="1681.00" width="1.20" height="26.50" fill="#4a4a4a" />
<rect x="824.80" y="1681.00" width="1.20" height="26.50" fill="#4a4a4a" />
<rect x="925.00" y="1681.00" width="1.20" height="26.50" fill="#4a4a4a" />
<rect x="1051.00" y="1681.00" width="1.20" height="26.50" fill="#4a4a4a" />
<rect x="1154.00" y="1681.00" width="1.20" height="26.50" fill="#4a4a4a" />
<rect x="1208.80" y="1681.00" width="1.20" height="26.50" fill="#4a4a4a" />
<rect x="1269.40" y="1681.00" width="1.20" height="26.50" fill="#4a4a4a" />
<rect x="1330.40" y="1681.00" width="1.20" height="26.50" fill="#4a4a4a" />
<rect x="1458.20" y="1681.00" width="1.20" height="26.50" fill="#4a4a4a" />
<rect x="1586.00" y="1681.00" width="1.20" height="26.50" fill="#4a4a4a" />
<rect x="1713.90" y="1681.00" width="1.20" height="26.50" fill="#4a4a4a" />
<rect x="1775.00" y="1681.00" width="1.20" height="26.50" fill="#4a4a4a" />
<rect x="1860.40" y="1681.00" width="1.20" height="26.50" fill="#4a4a4a" />
<rect x="1958.00" y="1681.00" width="1.20" height="26.50" fill="#4a4a4a" />
<rect x="2034.70" y="1681.00" width="1.20" height="26.50" fill="#4a4a4a" />
<rect x="299" y="1676" width="127.9" height="36" rx="5" fill="#fde96b"/>
<text transform="translate(314.08,1702.00) scale(0.9800,1)" font-family="Liberation Sans" font-weight="normal" font-size="20.29" fill="#141414" >Dashboard</text>
<rect x="440.3" y="1676" width="105.4" height="36" rx="5" fill="#fde96b"/>
<text transform="translate(452.77,1702.00) scale(0.9800,1)" font-family="Liberation Sans" font-weight="normal" font-size="20.29" fill="#141414" >Revenue</text>
<rect x="558.9" y="1676" width="157.7" height="36" rx="5" fill="#fde96b"/>
<text transform="translate(568.36,1702.00) scale(0.9800,1)" font-family="Liberation Sans" font-weight="normal" font-size="20.29" fill="#141414" >COGS &amp; OPEX</text>
<rect x="729.7" y="1676" width="89.1" height="36" rx="5" fill="#fde96b"/>
<text transform="translate(743.68,1702.00) scale(0.9800,1)" font-family="Liberation Sans" font-weight="normal" font-size="20.29" fill="#141414" >Payroll</text>
<rect x="832" y="1676" width="86.3" height="36" rx="5" fill="#fde96b"/>
<text transform="translate(841.12,1702.00) scale(0.9800,1)" font-family="Liberation Sans" font-weight="normal" font-size="20.29" fill="#141414" >CAPEX</text>
<rect x="932" y="1676" width="113.0" height="36" rx="5" fill="#fde96b"/>
<text transform="translate(946.36,1702.00) scale(0.9800,1)" font-family="Liberation Sans" font-weight="normal" font-size="20.29" fill="#141414" >CapTable</text>
<rect x="1058" y="1676" width="89.6" height="36" rx="5" fill="#fde96b"/>
<text transform="translate(1071.97,1702.00) scale(0.9800,1)" font-family="Liberation Sans" font-weight="normal" font-size="20.29" fill="#141414" >Capital</text>
<rect x="1161" y="1676" width="42.0" height="36" rx="5" fill="#4cb2e8"/>
<text transform="translate(1172.08,1702.00) scale(0.9800,1)" font-family="Liberation Sans" font-weight="normal" font-size="20.29" fill="#141414" >IS</text>
<rect x="1216" y="1676" width="48.0" height="36" rx="5" fill="#4cb2e8"/>
<text transform="translate(1226.56,1702.00) scale(0.9800,1)" font-family="Liberation Sans" font-weight="normal" font-size="20.29" fill="#141414" >CF</text>
<rect x="1277" y="1676" width="47.8" height="36" rx="5" fill="#4cb2e8"/>
<text transform="translate(1287.21,1702.00) scale(0.9800,1)" font-family="Liberation Sans" font-weight="normal" font-size="20.29" fill="#141414" >BS</text>
<rect x="1337.5" y="1676" width="115.8" height="36" rx="5" fill="#4cb2e8"/>
<text transform="translate(1351.09,1702.00) scale(0.9800,1)" font-family="Liberation Sans" font-weight="normal" font-size="20.29" fill="#141414" >Scenarios</text>
<rect x="1465.4" y="1676" width="115.6" height="36" rx="5" fill="#4cb2e8"/>
<text transform="translate(1483.04,1702.00) scale(0.9800,1)" font-family="Liberation Sans" font-weight="normal" font-size="20.29" fill="#141414" >Valuation</text>
<rect x="1593.2" y="1676" width="114.7" height="36" rx="5" fill="#4cb2e8"/>
<text transform="translate(1607.62,1702.00) scale(0.9800,1)" font-family="Liberation Sans" font-weight="normal" font-size="20.29" fill="#141414" >Summary</text>
<rect x="1720.8" y="1676" width="48.2" height="36" rx="5" fill="#4cb2e8"/>
<text transform="translate(1731.21,1702.00) scale(0.9800,1)" font-family="Liberation Sans" font-weight="normal" font-size="20.29" fill="#141414" >BE</text>
<rect x="1867" y="1676" width="85.0" height="36" rx="5" fill="#4cb2e8"/>
<text transform="translate(1880.02,1702.00) scale(0.9800,1)" font-family="Liberation Sans" font-weight="normal" font-size="20.29" fill="#141414" >Charts</text>
<rect x="1964.7" y="1676" width="64.0" height="36" rx="5" fill="#4cb2e8"/>
<text transform="translate(1975.21,1702.00) scale(0.9800,1)" font-family="Liberation Sans" font-weight="normal" font-size="20.29" fill="#141414" >KPIs</text>
<path d="M2071.9 1676 L2046.9 1676 Q2041.9 1676 2041.9 1681 L2041.9 1707 Q2041.9 1712 2046.9 1712 L2071.9 1712 Z" fill="#4cb2e8"/>
<defs><clipPath id="scc"><rect x="2040" y="1670" width="31.9" height="48"/></clipPath></defs>
<g clip-path="url(#scc)">
<text transform="translate(2053.20,1702.30) scale(0.9800,1)" font-family="Liberation Sans" font-weight="normal" font-size="20.29" fill="#141414" >Scenarios</text>
</g>
<path d="M1772 1669.5 Q1782.2 1669.5 1782.2 1679 L1782.2 1707 Q1782.2 1712 1787.2 1712 L1849.5 1712 Q1854.5 1712 1854.5 1707 L1854.5 1679 Q1854.5 1669.5 1864.5 1669.5 Z" fill="url(#tabg)"/>
<rect x="1772.00" y="1669.00" width="92.50" height="2.00" fill="#ffffff" />
<text transform="translate(1793.12,1697.70) scale(0.9298,1)" font-family="Liberation Sans" font-weight="normal" font-size="21.30" fill="#141414" >ROIC</text>
<rect x="1794.20" y="1705.00" width="47.80" height="2.80" fill="#1f8a4c" />
<circle cx="2088.8" cy="1692.9" r="2.1" fill="#ffffff"/>
<circle cx="2095.2" cy="1692.9" r="2.1" fill="#ffffff"/>
<circle cx="2101.6" cy="1692.9" r="2.1" fill="#ffffff"/>
<rect x="2135.00" y="1692.00" width="16.50" height="1.70" fill="#ffffff" />
<rect x="2142.40" y="1684.50" width="1.70" height="16.50" fill="#ffffff" />
<rect x="2190.60" y="1687.20" width="2.80" height="2.60" fill="#ffffff" />
<rect x="2190.60" y="1693.20" width="2.80" height="2.60" fill="#ffffff" />
<rect x="2190.60" y="1699.20" width="2.80" height="2.60" fill="#ffffff" />
<rect x="2216" y="1679.5" width="642" height="27" rx="13.5" fill="#151515"/>
<path d="M2234.7 1686 L2224 1692.8 L2234.7 1699.6 Z" fill="#9a9a9a" stroke="#9a9a9a" stroke-width="1" stroke-linejoin="round"/>
<rect x="2242" y="1686.3" width="553" height="13.3" rx="6.6" fill="#9a9a9a"/>
<path d="M2840 1686 L2850.7 1692.8 L2840 1699.6 Z" fill="#9a9a9a" stroke="#9a9a9a" stroke-width="1" stroke-linejoin="round"/>
<text transform="translate(26.20,1741.70) scale(0.7993,1)" font-family="Liberation Sans" font-weight="normal" font-size="18.70" fill="#d6d6d6" >Ready</text>
<rect x="99.6" y="1726.6" width="20.4" height="17.8" fill="none" stroke="#e8e8e8" stroke-width="1.5"/><path d="M99.6 1730.6 L120 1730.6" stroke="#e8e8e8" stroke-width="1.4"/>
<rect x="101.60" y="1733.60" width="4.40" height="1.40" fill="#e8e8e8" />
<rect x="101.60" y="1737.60" width="3.00" height="1.40" fill="#e8e8e8" />
<circle cx="112.8" cy="1739.2" r="5.6" fill="#141414" stroke="#e8e8e8" stroke-width="1.6"/><circle cx="112.8" cy="1739.2" r="2.3" fill="#e8e8e8"/>
<circle cx="156.5" cy="1728.6" r="2.4" fill="none" stroke="#e8e8e8" stroke-width="1.4"/><path d="M147 1731.5 Q152 1735 156.5 1733 Q161 1735 166 1731.5 M156.5 1733 L156.5 1737.5 L152 1745 M156.5 1737.5 L158 1740" fill="none" stroke="#e8e8e8" stroke-width="1.5" stroke-linejoin="round"/><path d="M158.5 1738.5 L167.5 1746.5 M167.5 1738.5 L158.5 1746.5" stroke="#e8e8e8" stroke-width="1.5"/>
<text transform="translate(173.39,1741.20) scale(0.9399,1)" font-family="Liberation Sans" font-weight="bold" font-size="16.71" fill="#ffffff" >Accessibility: Investigate</text>
<rect x="2445.00" y="1719.00" width="60.00" height="31.00" fill="#262626" />
<rect x="2464.8" y="1726.2" width="18.6" height="17.6" fill="none" stroke="#e8e8e8" stroke-width="1.6"/><path d="M2471 1726.2 L2471 1743.8 M2477.2 1726.2 L2477.2 1743.8 M2464.8 1732 L2483.4 1732 M2464.8 1738 L2483.4 1738" stroke="#e8e8e8" stroke-width="1.4"/>
<rect x="2524.4" y="1726.2" width="20.6" height="17.6" fill="none" stroke="#e8e8e8" stroke-width="1.6"/><rect x="2528.6" y="1729.4" width="12.2" height="11.2" fill="none" stroke="#e8e8e8" stroke-width="1.3"/><path d="M2530.5 1732.6 L2539 1732.6 M2530.5 1735 L2539 1735 M2530.5 1737.4 L2539 1737.4" stroke="#e8e8e8" stroke-width="1"/>
<path d="M2584.2 1726.2 L2604.8 1726.2 L2604.8 1743.8 L2584.2 1743.8 Z M2589.2 1726.2 L2589.2 1734.6 L2594.5 1734.6 L2594.5 1726.2 M2599 1726.2 L2599 1734.6" fill="none" stroke="#e8e8e8" stroke-width="1.6"/>
<rect x="2632.70" y="1733.80" width="11.70" height="1.40" fill="#d8d8d8" />
<rect x="2653.30" y="1734.00" width="147.70" height="1.40" fill="#bdbdbd" />
<rect x="2727.2" y="1727" width="8.2" height="15.2" rx="1" fill="#bdbdbd"/>
<rect x="2808.50" y="1733.80" width="12.50" height="1.40" fill="#d8d8d8" />
<rect x="2814.10" y="1728.20" width="1.30" height="12.60" fill="#d8d8d8" />
<text transform="translate(2839.40,1740.60) scale(0.9616,1)" font-family="Liberation Sans" font-weight="normal" font-size="16.29" fill="#e8e8e8" >120%</text>
</svg></body></html>
